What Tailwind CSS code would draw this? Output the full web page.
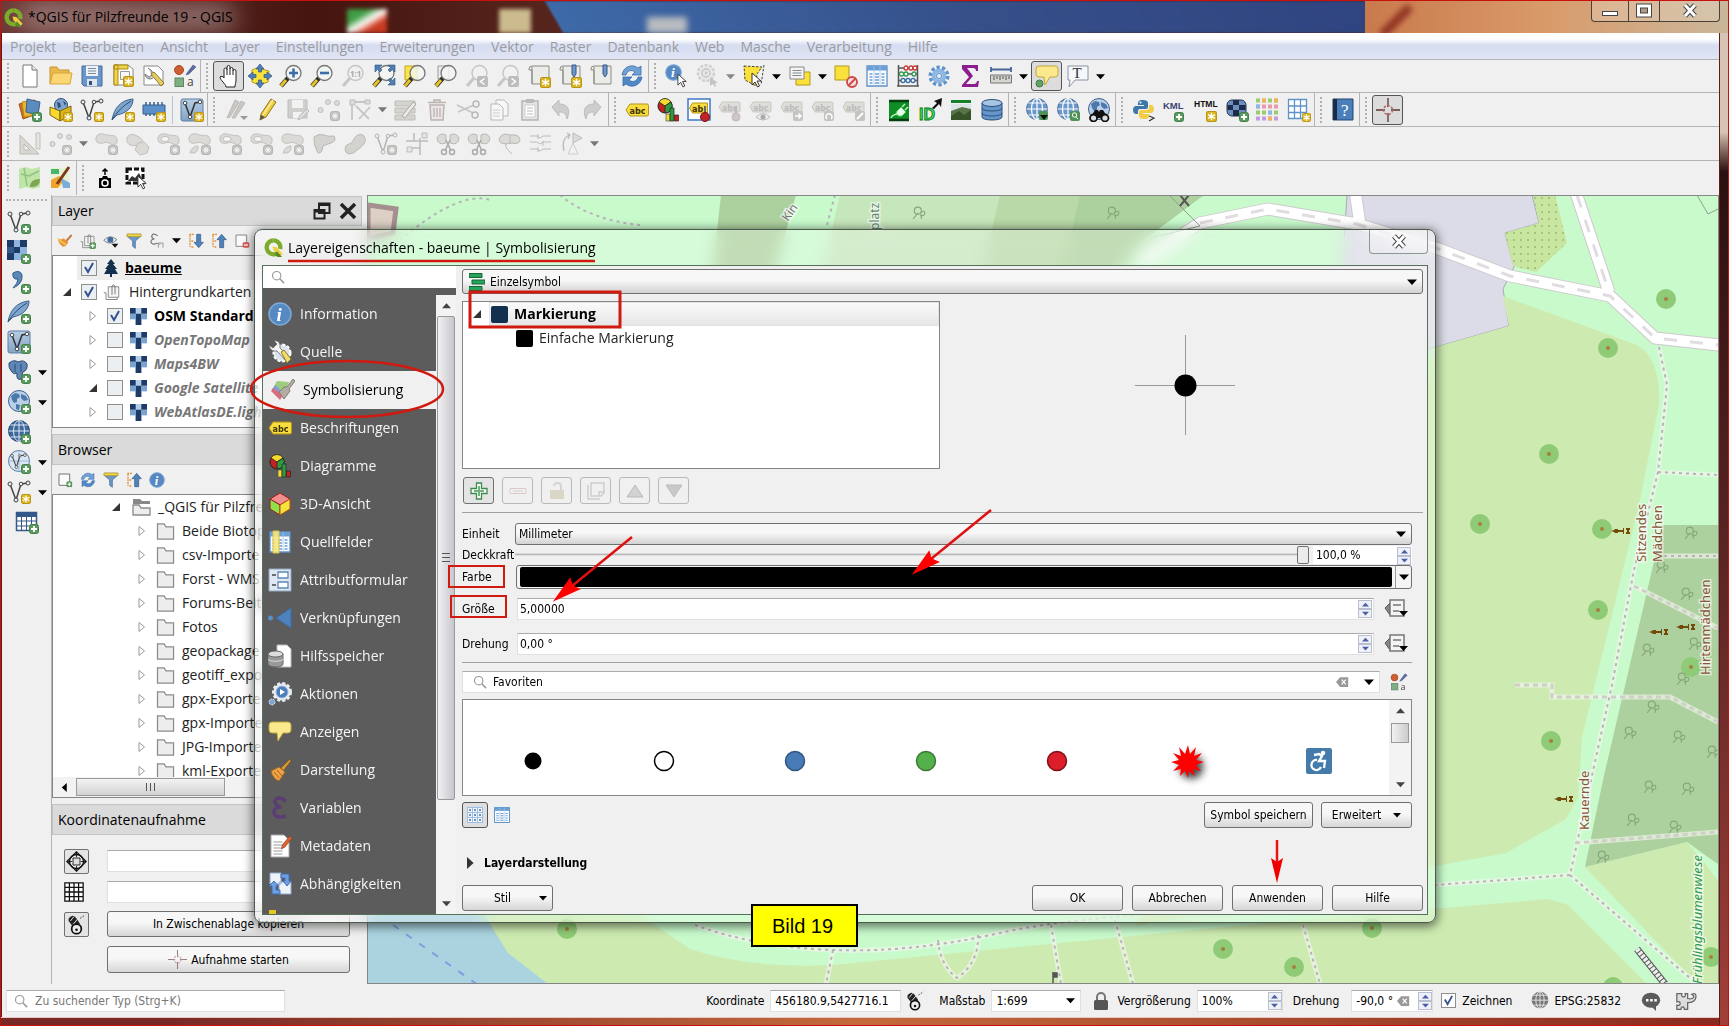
<!DOCTYPE html>
<html lang="de">
<head>
<meta charset="utf-8">
<title>*QGIS für Pilzfreunde 19 - QGIS</title>
<script src="https://cdn.jsdelivr.net/npm/@tailwindcss/browser@4"></script>
</head>
<body class="relative flex h-screen min-h-[1026px] flex-col overflow-hidden border border-[#c8100c] bg-[#5a1f1a] font-['Open_Sans',sans-serif] text-sm text-black">

<!-- shared paints -->
<svg class="absolute size-0" aria-hidden="true"><defs>
<linearGradient id="gBlue" x1="0" y1="0" x2="0" y2="1"><stop offset="0" stop-color="#8fb8de"/><stop offset="1" stop-color="#3a6ea5"/></linearGradient>
<pattern id="pDots" width="7" height="7" patternUnits="userSpaceOnUse"><circle cx="2" cy="2" r="1" fill="#9ab970"/></pattern>
</defs></svg>
<!-- icon library -->
<svg class="hidden" xmlns="http://www.w3.org/2000/svg">
<symbol id="plus" viewBox="0 0 10 10"><rect x=".5" y=".5" width="9" height="9" rx="2" fill="#5b9a5f" stroke="#44804a"/><path d="M5 2v6M2 5h6" stroke="#fff" stroke-width="1.800"/></symbol>
<symbol id="star" viewBox="0 0 10 10"><rect x=".5" y=".5" width="9" height="9" rx="1.500" fill="#dcb41c" stroke="#b8951a"/><path d="M5 1.500v7M1.800 3.200l6.400 3.600M8.200 3.200L1.800 6.800" stroke="#fff" stroke-width="1.300"/></symbol>
<symbol id="gbadge" viewBox="0 0 10 10"><rect x=".5" y=".5" width="9" height="9" rx="2" fill="#c4c4c0" stroke="#b4b4b0"/><path d="M5 2v6M2 5h6M3 3l4 4M7 3L3 7" stroke="#f6f6f6"/></symbol>
<symbol id="down" viewBox="0 0 10 10"><path d="M0 2.500h10L5 8z" fill="currentColor"/></symbol>
<symbol id="up" viewBox="0 0 10 10"><path d="M0 8h10L5 2.500z" fill="currentColor"/></symbol>
<symbol id="lens" viewBox="0 0 16 16"><circle cx="6.500" cy="6.500" r="4.800" fill="none" stroke="#999" stroke-width="1.300"/><path d="M10 10l5 5" stroke="#999" stroke-width="1.700"/></symbol>
<symbol id="qgis" viewBox="0 0 22 22"><path d="M11 3.500a7.300 7.300 0 1 0 3.500 13.800" fill="none" stroke="#7dac2c" stroke-width="4.500"/><path d="M11 3.500a7.300 7.300 0 0 1 7 9" fill="none" stroke="#7dac2c" stroke-width="4.500"/><path d="M10 10l4 .5 6.500 7-2.500 3-7-6.500z" fill="#ecd13c"/><path d="M14.500 15l5.500 6h-5l-2.500-3z" fill="#58872a"/></symbol>
<symbol id="new" viewBox="0 0 24 24"><path d="M5 1h9l5 5v17H5z" fill="#fff" stroke="#777"/><path d="M14 1v5h5" fill="#eee" stroke="#777"/></symbol>
<symbol id="open" viewBox="0 0 24 24"><path d="M1 20V3h7l2 3h10v4" fill="#eab84b" stroke="#c9962d"/><path d="M1 20L4 9h19l-2 11z" fill="#fbd675" stroke="#d9a63a"/></symbol>
<symbol id="save" viewBox="0 0 24 24"><path d="M2 2h20v20H4l-2-2z" fill="#6a96cc" stroke="#47699b"/><path d="M6 2h12v10H6z" fill="#edf1f5"/><path d="M8 4.500h8M8 7h8M8 9.500h8" stroke="#7f8c99"/><path d="M7 15h10v7H7z" fill="#dfe6ee"/><path d="M9 17h3v4H9z" fill="#30507c"/></symbol>
<symbol id="layout" viewBox="0 0 24 24"><path d="M3 1h14l5 4v16H3z" fill="#fff" stroke="#888"/><path d="M3 1h4v20H3zM3 1h14v4H3z" fill="#f1d44b" stroke="#ad8c10"/><path d="M9.500 7.500h9v8h-9z" fill="#f8f8f8" stroke="#999"/><use href="#star" x="12" y="12" width="11" height="11"/></symbol>
<symbol id="wrench" viewBox="0 0 24 24"><path d="M2 2h14l5 5v14H2z" fill="#fff" stroke="#888"/><path d="M6 4l4 3v4l-3 2-4-3a5 5 0 0 0 8 4" fill="#ccc" stroke="#777"/><path d="M9 10l3-2 10 11-3 3z" fill="#e5cd62" stroke="#8d7a29"/></symbol>
<symbol id="style" viewBox="0 0 24 24"><circle cx="6" cy="6" r="4.500" fill="#cf5f32" stroke="#a34a24"/><path d="M14 9l6-8 3 2-7 7-3 1z" fill="#5d6ca0" stroke="#3f4e80" stroke-width=".5"/><rect x="2" y="14" width="8.500" height="8.500" fill="#7fae84" stroke="#5c8862"/><text x="14" y="22" font-size="12" fill="#444" font-family="Open Sans">a</text></symbol>
<symbol id="hand" viewBox="0 0 24 24"><path d="M7 14V5.500a1.500 1.500 0 0 1 3 0V3a1.500 1.500 0 0 1 3 0v2a1.500 1.500 0 0 1 3 0v2a1.500 1.500 0 0 1 3 0v9c0 3-1 4-1 7H9c0-3-6-7-6-10 1-1 3-1 4 1z" fill="#fff" stroke="#222"/><path d="M10 5v6M13 5v6M16 7v4" stroke="#222"/></symbol>
<symbol id="pan" viewBox="0 0 24 24"><path d="M4 6l5-2 12 3-1 11-9 3-7-3z" fill="#f9e23c" stroke="#b39a12"/><path d="M12 0l4 5h-2.500v3h-3V5H8zM12 24l4-5h-2.500v-3h-3v3H8zM0 12l5-4v2.500h3v3H5V16zM24 12l-5-4v2.500h-3v3h3V16z" fill="#4f7fb5" stroke="#2f5580" stroke-width=".7"/></symbol>
<symbol id="mag" viewBox="0 0 24 24"><path d="M2 22l7-8" stroke="#2b2b2b" stroke-width="4.500"/><path d="M2 22l5-6" stroke="#e6c229" stroke-width="3"/><circle cx="14.500" cy="9" r="7.500" fill="#f4f6f4" fill-opacity=".8" stroke="#777" stroke-width="1.300"/></symbol>
<symbol id="gmag" viewBox="0 0 24 24"><path d="M2 22l7-8" stroke="#c6c6c6" stroke-width="3"/><circle cx="14.500" cy="9" r="7.500" fill="#f1f1f1" stroke="#c4c4c4" stroke-width="1.300"/></symbol>
<symbol id="zin" viewBox="0 0 24 24"><use href="#mag"/><path d="M14.500 4.500v9M10 9h9" stroke="#3b6ea8" stroke-width="2.600"/></symbol>
<symbol id="zout" viewBox="0 0 24 24"><use href="#mag"/><path d="M10 9h9" stroke="#3b6ea8" stroke-width="2.600"/></symbol>
<symbol id="z11" viewBox="0 0 24 24"><use href="#gmag"/><text x="9" y="12.500" font-size="8" font-weight="bold" fill="#aaa" font-family="Open Sans">1:1</text></symbol>
<symbol id="zfull" viewBox="0 0 24 24"><use href="#mag"/><path d="M3 1h7L7.500 3.500 10 6 8 8 5.500 5.500 3 8zM23 1v7l-2.500-2.500L18 8l-2-2 2.500-2.500L16 1zM23 21h-7l2.500-2.500L16 16l2-2 2.500 2.500L23 14z" fill="#4f7fb5" stroke="#2f5580" stroke-width=".6"/></symbol>
<symbol id="zsel" viewBox="0 0 24 24"><path d="M2 2h12v14H2z" fill="#fbe44a" stroke="#c2a516"/><use href="#mag"/></symbol>
<symbol id="zlay" viewBox="0 0 24 24"><path d="M4 2h11v13H4z" fill="#ececec" stroke="#999"/><use href="#mag"/></symbol>
<symbol id="zlast" viewBox="0 0 24 24"><use href="#gmag"/><rect x="12" y="12" width="11" height="11" rx="2" fill="#bdbdbd"/><path d="M19.500 14.500l-4 3 4 3" fill="none" stroke="#fff" stroke-width="1.500"/></symbol>
<symbol id="znext" viewBox="0 0 24 24"><use href="#gmag"/><rect x="12" y="12" width="11" height="11" rx="2" fill="#bdbdbd"/><path d="M15.500 14.500l4 3-4 3" fill="none" stroke="#fff" stroke-width="1.500"/></symbol>
<symbol id="map" viewBox="0 0 24 24"><path d="M2 5q0-3 3-3h17v18H5V6H2zM5 20V3" fill="#ebebe7" stroke="#8b8b85"/></symbol>
<symbol id="mapnew" viewBox="0 0 24 24"><use href="#map"/><use href="#star" x="13" y="13" width="11" height="11"/></symbol>
<symbol id="bm" viewBox="0 0 24 24"><use href="#map"/><path d="M14 1h4v9l-2 3-2-3z" fill="#6d98c8" stroke="#35578a"/></symbol>
<symbol id="bmnew" viewBox="0 0 24 24"><use href="#bm"/><use href="#star" x="13" y="13" width="11" height="11"/></symbol>
<symbol id="refresh" viewBox="0 0 24 24"><path d="M2 11C3 3 12-1 18 4l3-2v9h-9l3-3c-4-3-8-1-9 3z" fill="#6fa0d6" stroke="#3d6da8" stroke-width=".8"/><path d="M22 13c-1 8-10 12-16 7l-3 2v-9h9l-3 3c4 3 8 1 9-3z" fill="#5088c6" stroke="#3d6da8" stroke-width=".8"/></symbol>
<symbol id="cursor" viewBox="0 0 12 16"><path d="M1 1v12l3-3 2.500 5 2-1-2.500-5h4z" fill="#fff" stroke="#333"/></symbol>
<symbol id="info" viewBox="0 0 24 24"><circle cx="12" cy="12" r="11" fill="#5689c2" stroke="#7fa9d6" stroke-width="1.500"/><text x="8.500" y="19" font-size="19" font-style="italic" font-weight="bold" fill="#fff" font-family="Liberation Serif">i</text></symbol>
<symbol id="ident" viewBox="0 0 24 24"><use href="#info" width="17" height="17"/><use href="#cursor" x="12" y="9" width="11" height="15"/></symbol>
<symbol id="action" viewBox="0 0 24 24"><circle cx="10" cy="9" r="8" fill="#e9e9e9" stroke="#cfcfcf" stroke-width="2.500" stroke-dasharray="3 1.500"/><circle cx="10" cy="9" r="4" fill="none" stroke="#c4c4c4" stroke-width="1.500"/><path d="M9 7l3 2-3 2zM14 13v9l3-2 2 3 1-1-1-3h3z" fill="#c4c4c4"/></symbol>
<symbol id="select" viewBox="0 0 24 24"><path d="M2 2l18 1-5 7-1 12L3 16z" fill="#fae03a" stroke="#444" stroke-dasharray="2.500 1.500"/><path d="M22 1l-3 20" stroke="#444" stroke-dasharray="2.500 1.500"/><use href="#cursor" x="9" y="8" width="12" height="16"/></symbol>
<symbol id="selform" viewBox="0 0 24 24"><path d="M8 8h14v13H8z" fill="#fae03a" stroke="#b49a18"/><path d="M2 3h14v12H2z" fill="#f4f4f4" stroke="#888"/><path d="M4.500 6.500h9M4.500 9h9M4.500 11.500h9" stroke="#888"/></symbol>
<symbol id="desel" viewBox="0 0 24 24"><path d="M1 2h14v14H1z" fill="#fae03a" stroke="#b49a18"/><circle cx="18" cy="18" r="5" fill="#f7dcdc" stroke="#cd4747" stroke-width="1.800"/><path d="M14.500 21.500l7-7" stroke="#cd4747" stroke-width="1.800"/></symbol>
<symbol id="table" viewBox="0 0 24 24"><path d="M2 2h20v20H2z" fill="#fbfdff" stroke="#5b8fc6" stroke-width="1.300"/><path d="M2 2h20v4.500H2z" fill="#6b9fd6"/><path d="M4.500 10h3M10 10h4M16.500 10h3M4.500 13h3M10 13h4M16.500 13h3M4.500 16h3M10 16h4M16.500 16h3M4.500 19h3M10 19h4M16.500 19h3" stroke="#6b9fd6" stroke-width="1.500"/><path d="M9 2v20M15 2v20" stroke="#a8c6e6" stroke-width=".8"/></symbol>
<symbol id="abacus" viewBox="0 0 24 24"><path d="M2.500 1v21M21.500 1v21M2 4h20M2 10h20M2 16.500h20M1 22h22" stroke="#555" stroke-width="1.500"/><g fill="#fff" stroke-width="1.300"><g stroke="#cc3434"><circle cx="10" cy="4" r="2"/><circle cx="15" cy="4" r="2"/><circle cx="19" cy="4" r="2"/></g><g stroke="#2f9a51"><circle cx="5.500" cy="10" r="2"/><circle cx="10" cy="10" r="2"/><circle cx="18" cy="10" r="2"/></g><g stroke="#3a6ea5"><circle cx="7" cy="16.500" r="2"/><circle cx="12" cy="16.500" r="2"/><circle cx="17" cy="16.500" r="2"/></g></g></symbol>
<symbol id="gear" viewBox="0 0 24 24"><circle cx="12" cy="12" r="8.500" fill="none" stroke="#5f93cd" stroke-width="4" stroke-dasharray="3.200 2.140"/><circle cx="12" cy="12" r="5.500" fill="#a4c6ea" stroke="#8db6e2" stroke-width="3.500"/><circle cx="12" cy="12" r="2.500" fill="#f0f0f0" stroke="#5f93cd"/></symbol>
<symbol id="sigma" viewBox="0 0 24 24"><path d="M4 1h16v6h-2c0-2-1-3-3-3H9l6 8-7 8h8c2 0 3-2 3-3h2l-1 6H4v-2l7-8-7-8z" fill="#8d1c8f"/></symbol>
<symbol id="measure" viewBox="0 0 24 24"><path d="M2 5.500h20M2 3v5M22 3v5" stroke="#46639a" stroke-width="1.800"/><path d="M1.500 11h21v8h-21z" fill="#d4d4d0" stroke="#777"/><path d="M5 12v4M8 12v3M11 12v4M14 12v3M17 12v4M20 12v3" stroke="#555"/></symbol>
<symbol id="bubble" viewBox="0 0 24 24"><path d="M4 2h16q3 0 3 3v5q0 3-3 3h-5l-5 8-1-8H4q-3 0-3-3V5q0-3 3-3z" fill="#fbe98e" stroke="#c1a63c"/></symbol>
<symbol id="tip" viewBox="0 0 24 24"><use href="#bubble"/><circle cx="4.500" cy="19.500" r="3.500" fill="#63a069" stroke="#3f7d47"/></symbol>
<symbol id="textann" viewBox="0 0 24 24"><path d="M2 2h20v14H9l-6 7 1-7H2z" fill="#f6f7fa" stroke="#8a93a5"/><text x="6.500" y="14" font-size="15" fill="#333" font-family="Liberation Serif">T</text></symbol>
<symbol id="dsm" viewBox="0 0 24 24"><path d="M1 6l12-3 3 14-11 4z" fill="#d66f1f" stroke="#a45213"/><path d="M4 4l13-2 1 15-12 2z" fill="#e9b833" stroke="#b38a1a"/><path d="M9 1l13 3-2 13-12-3z" fill="#5c8bbd" stroke="#3b618c"/><use href="#plus" x="14" y="14" width="10" height="10"/></symbol>
<symbol id="gpkg" viewBox="0 0 24 24"><circle cx="12" cy="7" r="6.500" fill="#7ea6d0" stroke="#2e4d74"/><path d="M8 4l3 1 1 4-3 1zM14 3l3 2-1 3z" fill="#2e4d74"/><path d="M1 9l10 4v10L1 17z" fill="#f9d92f" stroke="#7d6608"/><path d="M22 8l-11 5v10l11-6z" fill="#dcb41c" stroke="#7d6608"/><use href="#star" x="14" y="14" width="10" height="10"/></symbol>
<symbol id="vec" viewBox="0 0 24 24"><path d="M3 4l6 16 5-16 7-1" fill="none" stroke="#444" stroke-width="1.500"/><g fill="#e4ecf4" stroke="#444"><circle cx="3" cy="4" r="2"/><circle cx="9" cy="20" r="2"/><circle cx="14" cy="4" r="1.800"/><circle cx="21" cy="3" r="2"/></g></symbol>
<symbol id="vecnew" viewBox="0 0 24 24"><use href="#vec"/><use href="#star" x="14" y="14" width="10" height="10"/></symbol>
<symbol id="vecplus" viewBox="0 0 24 24"><use href="#vec"/><use href="#plus" x="14" y="14" width="10" height="10"/></symbol>
<symbol id="feather" viewBox="0 0 24 24"><path d="M1 22C3 10 10 2 22 1c0 8-6 14-16 16z" fill="#7fa6cf" stroke="#3b618c"/><path d="M1 22Q8 10 20 3" stroke="#2e4d74" fill="none"/></symbol>
<symbol id="feanew" viewBox="0 0 24 24"><use href="#feather"/><use href="#star" x="14" y="14" width="10" height="10"/></symbol>
<symbol id="feaplus" viewBox="0 0 24 24"><use href="#feather"/><use href="#plus" x="14" y="14" width="10" height="10"/></symbol>
<symbol id="chip" viewBox="0 0 24 24"><path d="M4 4v14M8 4v14M12 4v14M16 4v14M20 4v14" stroke="#3b618c" stroke-width="1.500"/><path d="M1 7h22v9H1z" fill="#5c90c8" stroke="#355c8c"/><use href="#star" x="14" y="14" width="10" height="10"/></symbol>
<symbol id="vlay" viewBox="0 0 24 24"><rect x="1" y="1" width="22" height="22" rx="2" fill="url(#gBlue)" fill-opacity=".6" stroke="#5a7fa8"/><path d="M5 5l5 14 5-14 5-1" fill="none" stroke="#333" stroke-width="1.500"/><circle cx="5" cy="5" r="1.800" fill="#fff" stroke="#444"/><circle cx="10" cy="19" r="1.800" fill="#fff" stroke="#444"/><circle cx="20" cy="4" r="1.800" fill="#fff" stroke="#444"/></symbol>
<symbol id="vlaynew" viewBox="0 0 24 24"><use href="#vlay"/><use href="#star" x="14" y="14" width="10" height="10"/></symbol>
<symbol id="vlayplus" viewBox="0 0 24 24"><use href="#vlay"/><use href="#plus" x="14" y="14" width="10" height="10"/></symbol>
<symbol id="gedits" viewBox="0 0 24 24"><path d="M3 20L11 2l4 2L6 19zM8 20l9-17 4 2-10 15z" fill="#cbc7c1" stroke="#bbb"/><path d="M16 18h8l-4 4z" fill="#999"/></symbol>
<symbol id="pencil" viewBox="0 0 24 24"><path d="M5 22l1-6L16 1l5 3L11 19z" fill="#efcf3e" stroke="#8d7417"/><path d="M5 22l1-5 4 2z" fill="#555"/><path d="M8 17L18 2" stroke="#fbeb9a" stroke-width="1.500"/></symbol>
<symbol id="gsave" viewBox="0 0 24 24"><path d="M2 2h19v18H2z" fill="#cfcfcb" stroke="#bdbdb9"/><path d="M6 2h11v8H6zM7 14h9v6H7z" fill="#f2f2f2"/><path d="M12 22l2-5 7-6 2 2-7 7z" fill="#ddd" stroke="#bbb"/></symbol>
<symbol id="gpts" viewBox="0 0 24 24"><g fill="#dcdcda" stroke="#bdbdbb"><circle cx="3.500" cy="12" r="2.500"/><circle cx="11" cy="4" r="2.500"/><circle cx="20" cy="5" r="2.500"/></g><use href="#gbadge" x="13" y="13" width="10" height="10"/></symbol>
<symbol id="gvert" viewBox="0 0 24 24"><path d="M4 22V4h15M8 8l13 13M11 21L22 9" fill="none" stroke="#c6c6c4" stroke-width="1.800"/><path d="M2 2h5v5H2zM17 2h5v4h-5z" fill="#ddd" stroke="#bbb"/></symbol>
<symbol id="gattr" viewBox="0 0 24 24"><path d="M1 3h20v5H1zM1 10h20v5H1zM1 17h20v5H1z" fill="#d5d3ce" stroke="#c0beb9"/><path d="M8 18L19 4l3 2-11 14z" fill="#e9e9e5" stroke="#aaa"/></symbol>
<symbol id="trash" viewBox="0 0 24 24"><path d="M5 7h14l-1 15H6zM3 4.500h18M9 4V2h6v2" fill="#ebe6e4" stroke="#bcb3b0" stroke-width="1.500"/><path d="M9 10v9M12 10v9M15 10v9" stroke="#bcb3b0" stroke-width="1.300"/></symbol>
<symbol id="cut" viewBox="0 0 24 24"><path d="M1 7l16 8M2 14l16-7" stroke="#c6c6c4" stroke-width="1.800"/><circle cx="20" cy="6" r="3" fill="none" stroke="#b9b9b7" stroke-width="1.500"/><circle cx="19" cy="17" r="3" fill="none" stroke="#b9b9b7" stroke-width="1.500"/></symbol>
<symbol id="copy" viewBox="0 0 24 24"><path d="M9 2h8l4 4v12H9z" fill="#f7f7f7" stroke="#b9b9b7"/><path d="M4 6h8l4 4v12H4z" fill="#f7f7f7" stroke="#b9b9b7"/><path d="M6 12h7M6 15h7M6 18h7" stroke="#ccc"/></symbol>
<symbol id="paste" viewBox="0 0 24 24"><path d="M4 3h16v19H4z" fill="#e5e5e3" stroke="#b4b4b2" stroke-width="1.500"/><path d="M7 7h10v12H7z" fill="#fff" stroke="#ccc"/><path d="M8 1h8v4H8z" fill="#bbb"/><path d="M9 10h6M9 13h6M9 16h6" stroke="#bbb"/></symbol>
<symbol id="undo" viewBox="0 0 24 24"><path d="M3 9l7-7v4c9 0 12 6 8 15-1-6-3-7-8-7v4z" fill="#cdcdcb" stroke="#bcbcba"/></symbol>
<symbol id="redo" viewBox="0 0 24 24"><path d="M21 9l-7-7v4C5 6 2 12 6 21c1-6 3-7 8-7v4z" fill="#cdcdcb" stroke="#bcbcba"/></symbol>
<symbol id="abc" viewBox="0 0 24 24"><path d="M1 12l4-6h17q1.500 0 1.500 1.500v9q0 1.500-1.500 1.500H5z" fill="#f8dd3d" stroke="#b4941a"/><text x="4.500" y="15.500" font-size="9" font-weight="bold" fill="#3d3205" font-family="DejaVu Sans Condensed">abc</text></symbol>
<symbol id="diag" viewBox="0 0 24 24"><circle cx="9" cy="8" r="7" fill="#c81f1f" stroke="#222"/><path d="M9 8L3 4a7 7 0 0 1 12 0z" fill="#f5dc2c" stroke="#222" stroke-width=".8"/><path d="M9 8l6-4a7 7 0 0 1-6 11z" fill="#2f9a3f" stroke="#222" stroke-width=".8"/><path d="M10 16h4v7h-4z" fill="#f5dc2c" stroke="#555" stroke-width=".7"/><path d="M14 10h4v13h-4z" fill="#2f9a3f" stroke="#222" stroke-width=".7"/><path d="M18.500 17h4v6h-4z" fill="#c81f1f" stroke="#222" stroke-width=".7"/></symbol>
<symbol id="abpin" viewBox="0 0 24 24"><path d="M1 1h22v21H1z" fill="#fff" stroke="#3b79c6" stroke-width="1.500"/><path d="M2.500 10l3-5h15v10h-15z" fill="#f8dd3d" stroke="#b4941a"/><text x="5" y="14" font-size="9" font-weight="bold" fill="#3d3205" font-family="DejaVu Sans Condensed">ab</text><path d="M18 8v8" stroke="#666" stroke-width="2"/><circle cx="18" cy="19" r="4.500" fill="#c22525" stroke="#7d1212"/></symbol>
<symbol id="glab" viewBox="0 0 24 24"><path d="M1 9l3-5h17q1 0 1 1v8q0 1-1 1H4z" fill="#deddd8" stroke="#c9c8c3"/><text x="4" y="12.500" font-size="8.500" font-weight="bold" fill="#bbb" font-family="DejaVu Sans Condensed">abc</text></symbol>
<symbol id="glab1" viewBox="0 0 24 24"><use href="#glab"/><path d="M18 8v8" stroke="#bbb" stroke-width="2"/><circle cx="18" cy="19" r="4" fill="#cfc6c4" stroke="#bbb"/></symbol>
<symbol id="glab2" viewBox="0 0 24 24"><use href="#glab"/><path d="M7 19q7-7 14 0-7 6-14 0z" fill="#eee" stroke="#bbb"/><circle cx="14" cy="19" r="2.500" fill="#aaa"/></symbol>
<symbol id="glab3" viewBox="0 0 24 24"><use href="#glab"/><rect x="13" y="13" width="10" height="10" rx="2" fill="#c4c4c0"/><path d="M15 18h6M18.500 15.500l2.500 2.500-2.500 2.500" stroke="#fff" fill="none" stroke-width="1.500"/></symbol>
<symbol id="glab4" viewBox="0 0 24 24"><use href="#glab"/><rect x="13" y="13" width="10" height="10" rx="2" fill="#c4c4c0"/><path d="M16 21a3 3 0 1 1 4 0" stroke="#fff" fill="none" stroke-width="1.500"/></symbol>
<symbol id="glab5" viewBox="0 0 24 24"><use href="#glab"/><rect x="13" y="13" width="10" height="10" rx="2" fill="#c4c4c0"/><path d="M15 21l6-6" stroke="#fff" stroke-width="2"/></symbol>
<symbol id="plug" viewBox="0 0 24 24"><path d="M2 4h20v18H2z" fill="#0e8d26"/><path d="M2 3h20M2 22h20" stroke="#053f10" stroke-width="2.500"/><path d="M10 13l4-4 5 5-4 4q-3 1-5-1t0-4z" fill="#e8fbe8" stroke="#39c24e"/><path d="M4 20q1-3 6-4M15 9l3-3M18 12l3-3" stroke="#b8f0be" stroke-width="1.500" fill="none"/></symbol>
<symbol id="idarrow" viewBox="0 0 24 24"><text x="1" y="22" font-size="16" font-weight="bold" fill="#3be04c" stroke="#0b6e1b" stroke-width=".8" font-family="Liberation Sans">ID</text><path d="M14 10l5-5-3-2 8-3-1 9-2-3-5 5z" fill="#111"/></symbol>
<symbol id="photo" viewBox="0 0 24 24"><path d="M2 2h20v3H2z" fill="#13812a"/><path d="M2 6h20v16H2z" fill="#59744b"/><path d="M2 6h20v5l-9-2-11 4z" fill="#dce3e6"/><path d="M2 18l8-5 5 4 7-5v10H2z" fill="#385229"/></symbol>
<symbol id="db" viewBox="0 0 24 24"><path d="M2 5v14c0 4 20 4 20 0V5" fill="#6596cb" stroke="#2d4f7a"/><ellipse cx="12" cy="5" rx="10" ry="3.500" fill="#a6c4e4" stroke="#2d4f7a"/><path d="M2 10c0 4 20 4 20 0M2 15c0 4 20 4 20 0" fill="none" stroke="#2d4f7a"/></symbol>
<symbol id="globe" viewBox="0 0 24 24"><circle cx="12" cy="11" r="10.500" fill="#6c98c9" stroke="#496f9e"/><path d="M12 .5v21M1.500 11h21M3.500 5h17M3.500 17h17" stroke="#fff" stroke-width="1.200"/><ellipse cx="12" cy="11" rx="5.500" ry="10.500" fill="none" stroke="#fff" stroke-width="1.200"/></symbol>
<symbol id="globe1" viewBox="0 0 24 24"><use href="#globe"/><rect x="14" y="13" width="9" height="9" rx="2" fill="#4f9256"/><path d="M15 17h8l-4 5z" fill="#111"/></symbol>
<symbol id="globe2" viewBox="0 0 24 24"><use href="#globe"/><rect x="14" y="13" width="10" height="10" rx="2" fill="#4f9256"/><circle cx="18.500" cy="17" r="2.200" fill="none" stroke="#fff"/><path d="M20 19l2 2" stroke="#fff"/></symbol>
<symbol id="earth" viewBox="0 0 24 24"><circle cx="12" cy="11" r="10.500" fill="#b9d0e8" stroke="#3d618f"/><path d="M4 6l4-3 4 1 1 3-3 2v3l-3 1-2-3zM14 4l5 2 2 4-4 1-3-3zM9 14l4 1-1 5-3-1z" fill="#4c78ab"/></symbol>
<symbol id="bino" viewBox="0 0 24 24"><use href="#earth"/><path d="M8 12h3l1 2 1-2h3l5 8H3z" fill="#111"/><circle cx="6.500" cy="20" r="3.500" fill="#ddd" stroke="#111" stroke-width="1.800"/><circle cx="18" cy="20" r="3.500" fill="#ddd" stroke="#111" stroke-width="1.800"/></symbol>
<symbol id="python" viewBox="0 0 24 24"><path d="M11 2c-5 0-5 2-5 5h6v1H4c-4 0-4 8 0 8h2v-3q0-2 2-2h6q2 0 2-2V5c0-2-2-3-5-3z" fill="#3c78a8"/><circle cx="8.500" cy="4.500" r="1" fill="#fff"/><path d="M12 21c5 0 5-2 5-4v-1h-6v-1h8c4 0 4-8 0-8h-2v3q0 2-2 2H9q-2 0-2 2v4c0 2 2 3 5 3z" fill="#f3cd43"/><path d="M17 18l5 2-5 3" fill="none" stroke="#333" stroke-width="1.200"/></symbol>
<symbol id="kml" viewBox="0 0 24 24"><text x="0" y="11" font-size="9.500" font-weight="bold" fill="#3d4470" font-family="Liberation Sans">KML</text><use href="#plus" x="11" y="14" width="10" height="10"/></symbol>
<symbol id="html" viewBox="0 0 24 24"><text x="0" y="9" font-size="8.500" font-weight="bold" fill="#111" font-family="Liberation Sans">HTML</text><use href="#star" x="12" y="13" width="11" height="11"/></symbol>
<symbol id="rasplus" viewBox="0 0 24 24"><rect x="2" y="2" width="19" height="16" rx="5" fill="#6c8fbf" stroke="#23344f"/><path d="M8 2h6v5H8zM2.500 7H8v5H2.500zM14 7h6.500v5H14zM8 12h6v6H8z" fill="#1d2d49"/><use href="#plus" x="14" y="14" width="10" height="10"/></symbol>
<symbol id="mosaic" viewBox="0 0 24 24"><g stroke-width="4" stroke-dasharray="4 2"><path d="M0 2.500h24M0 14.500h24" stroke="#9ccb6e"/><path d="M0 8.500h24" stroke="#e99aa8"/><path d="M0 20.500h24" stroke="#c49ae0"/><path d="M6 2.500h4M18 2.500h4M12 20.500h4" stroke="#f0b35c"/><path d="M12 14.500h4M0 8.500h4" stroke="#8db9ea"/></g></symbol>
<symbol id="grid" viewBox="0 0 24 24"><path d="M1.500 1.500h18v19h-18zM1.500 8h18M1.500 14.500h18M7.500 1.500v19M13.500 1.500v19" fill="#fff" stroke="#5e93c8" stroke-width="1.300"/><use href="#star" x="15" y="15" width="9" height="9"/></symbol>
<symbol id="helpb" viewBox="0 0 24 24"><path d="M2 1h20v21H2z" fill="#4b7fbb" stroke="#24446e"/><path d="M2 1h4v21H2z" fill="#1c2c44"/><text x="10" y="18" font-size="17" fill="#fff" font-family="Liberation Serif">?</text></symbol>
<symbol id="cross" viewBox="0 0 24 24"><path d="M12 0v9M12 15v9M0 12h9M15 12h9" stroke="#5a3434" stroke-width="1.300"/><circle cx="12" cy="12" r="4.500" fill="none" stroke="#b36a6a" stroke-width="1.500" stroke-dasharray="2.500 1.500"/></symbol>
<symbol id="tri" viewBox="0 0 24 24"><path d="M2 3v19h19zM6 12v6h6z" fill="#dad7d2" fill-rule="evenodd" stroke="#bdbab5"/><path d="M18 1h4v16h-4z" fill="#e6e4e0" stroke="#c2c0bb"/></symbol>
<symbol id="blob" viewBox="0 0 24 24"><path d="M1 6C2 0 9 2 12 3s9-1 10 4-3 7-6 5-5-2-8-1-8 0-7-5z" fill="#dbdad7" stroke="#c2c1be"/></symbol>
<symbol id="b1" viewBox="0 0 24 24"><use href="#blob"/><use href="#gbadge" x="13" y="13" width="10" height="10"/></symbol>
<symbol id="b2" viewBox="0 0 24 24"><path d="M1 6q2-5 8-3t8 6l-4 5-9-1q-4-2-3-7z" fill="#dbdad7" stroke="#c2c1be"/><path d="M12 11l6-1 5 5-2 6-7 2-5-5z" fill="#dbdad7" stroke="#c2c1be"/></symbol>
<symbol id="b3" viewBox="0 0 24 24"><use href="#blob"/><ellipse cx="8" cy="7" rx="4" ry="2.500" fill="#f6f6f6" stroke="#c2c1be"/><use href="#gbadge" x="13" y="13" width="10" height="10"/></symbol>
<symbol id="b4" viewBox="0 0 24 24"><use href="#blob"/><path d="M2 21q2-7 8-7 1 8-8 7z" fill="#dbdad7" stroke="#c2c1be"/><use href="#gbadge" x="13" y="13" width="10" height="10"/></symbol>
<symbol id="b5" viewBox="0 0 24 24"><path d="M2 5q5-4 10-2t10 1q3 5-3 7t-8 3q-1 8-5 7-5-8-4-16z" fill="#d3d2cf" stroke="#bab9b6"/></symbol>
<symbol id="b6" viewBox="0 0 24 24"><path d="M2 17q0-4 4-5t5-5q3-6 9-4 4 3 1 9-3 4-7 6-3 4-8 4-4-1-4-5z" fill="#d3d2cf" stroke="#bab9b6"/></symbol>
<symbol id="b7" viewBox="0 0 24 24"><g opacity=".35"><use href="#vec"/></g><use href="#gbadge" x="13" y="13" width="10" height="10"/></symbol>
<symbol id="b8" viewBox="0 0 24 24"><path d="M1 9h22M9 1v8M15 6v17M6 16h9" stroke="#bbb" stroke-width="1.500"/><path d="M17 1h5v5h-5zM2 15h5v5H2z" fill="#e5e5e5" stroke="#bbb"/></symbol>
<symbol id="b9" viewBox="0 0 24 24"><path d="M1 6q3-6 9-3v8q-8 3-9-5zM23 6q-3-6-9-3v8q8 3 9-5z" fill="#dbdad7" stroke="#b9b8b5"/><path d="M10 8l5 11M14 8L9 19" stroke="#aaa" stroke-width="1.500"/><circle cx="8" cy="20" r="2.500" fill="none" stroke="#aaa" stroke-width="1.500"/><circle cx="16" cy="20" r="2.500" fill="none" stroke="#aaa" stroke-width="1.500"/></symbol>
<symbol id="b10" viewBox="0 0 24 24"><path d="M1 7q3-7 11-4 10-1 10 5-1 5-8 3Q1 14 1 7z" fill="#dbdad7" stroke="#b9b8b5"/><path d="M12 3v9M8 12q-2 3 6 10" stroke="#bbb" fill="none"/></symbol>
<symbol id="b11" viewBox="0 0 24 24"><path d="M1 4h7l3 2 3-2h8M1 10h7l3 2 3-2h8M1 17h7l3 2 3-2h8M9 2v5M14 9v5M9 15v5" fill="none" stroke="#bbb"/></symbol>
<symbol id="b12" viewBox="0 0 24 24"><path d="M9 3Q1 7 4 19M7 1l3 2-2 4" fill="none" stroke="#bbb" stroke-width="1.300"/><path d="M13 1l9 5-9 5z" fill="#dcdbd8" stroke="#bbb"/><path d="M13 11l-5 11h10z" fill="none" stroke="#ccc"/></symbol>
<symbol id="osm1" viewBox="0 0 24 24"><path d="M1 3l6-2 7 2 8-2v20l-7 2-7-2-7 2z" fill="#bfe5a8"/><path d="M3 8l8 2 10-5M6 2l3 18" stroke="#8fc383" fill="none" stroke-width="1.500"/><path d="M12 21q0-8 10-8 0 9-10 8z" fill="#7da552"/></symbol>
<symbol id="osm2" viewBox="0 0 24 24"><path d="M2 2h18v19H2z" fill="#e8f1d2"/><path d="M2 3h8v5H2z" fill="#46b66a"/><path d="M2 14l8-4 5 4-6 8H2z" fill="#f2a32b"/><path d="M12 12l9 5v5h-7z" fill="#7aaed8"/><path d="M20 1L8 18" stroke="#7a3b1c" stroke-width="3"/></symbol>
<symbol id="cam" viewBox="0 0 24 24"><path d="M6 12h3l1-2h4l1 2h3v10H6z" fill="#000"/><circle cx="12" cy="17" r="3" fill="none" stroke="#fff" stroke-width="1.500"/><path d="M12 9V3M9.500 5.500L12 3l2.500 2.500" stroke="#000" fill="none" stroke-width="1.500"/></symbol>
<symbol id="shot" viewBox="0 0 24 24"><path d="M3 3h16v14H3z" fill="#fff" stroke="#111" stroke-width="3" stroke-dasharray="5 2"/><path d="M4 15l4-5 3 2 4-5 4 8z" fill="#333"/><use href="#cursor" x="13" y="9" width="11" height="15"/></symbol>
<symbol id="raster" viewBox="0 0 18 18"><path d="M0 0h18v12h-6v6H6v-6H0z" fill="#b4cde8"/><path d="M0 0h6v6H0zM12 0h6v6h-6zM6 6h6v6H6zM6 12h6v6H6z" fill="#1d3a68"/><path d="M0 6h6v6H0zM12 6h6v6h-6z" fill="#7ba3d0"/></symbol>
<symbol id="rasadd" viewBox="0 0 24 24"><path d="M0 0h20v20H0z" fill="#8fb3dc"/><path d="M0 0h7v7H0zM13 0h7v7h-7zM7 7h6v6H7zM0 13h7v7H0z" fill="#1d3a68"/><path d="M0 7h7v6H0z" fill="#33588a"/><use href="#plus" x="14" y="14" width="10" height="10"/></symbol>
<symbol id="comma" viewBox="0 0 24 24"><path d="M6 3q7-4 9 2 1 9-9 13 5-5 5-9-6 1-5-6z" fill="#5c88b8" stroke="#355c8c"/><use href="#plus" x="14" y="14" width="10" height="10"/></symbol>
<symbol id="eleph" viewBox="0 0 24 24"><path d="M2 3q5-4 9-1 6-3 9 2 1 6-4 8-1 2-2 7-5 2-4-6-3 2-5-1-4-4-3-9z" fill="#5d87b5" stroke="#2e4d74"/><path d="M8 4v8M14 4v8" stroke="#2e4d74"/><use href="#plus" x="14" y="14" width="10" height="10"/></symbol>
<symbol id="earthp" viewBox="0 0 24 24"><use href="#earth"/><use href="#plus" x="14" y="14" width="10" height="10"/></symbol>
<symbol id="globp" viewBox="0 0 24 24"><circle cx="12" cy="11" r="10.500" fill="#3f699c" stroke="#24446e"/><path d="M12 .5v21M1.500 11h21M3.500 5h17M3.500 17h17" stroke="#dce8f5"/><ellipse cx="12" cy="11" rx="5.500" ry="10.500" fill="none" stroke="#dce8f5"/><use href="#plus" x="14" y="14" width="10" height="10"/></symbol>
<symbol id="globv" viewBox="0 0 24 24"><circle cx="12" cy="11" r="10.500" fill="#dbe7f3" stroke="#5a7fa8"/><path d="M12 .5v21M1.500 11h21" stroke="#9dbad8"/><use href="#vec" x="3" y="3" width="17" height="17"/><use href="#plus" x="14" y="14" width="10" height="10"/></symbol>
<symbol id="tabadd" viewBox="0 0 24 24"><path d="M1.500 2.500h20v18h-20z" fill="#fff" stroke="#33588a" stroke-width="1.500"/><path d="M1 2h21v5H1z" fill="#33588a"/><path d="M6.500 3v18M11.500 3v18M16.500 3v18M1 11h21M1 16h21" stroke="#33588a"/><use href="#plus" x="14" y="14" width="10" height="10"/></symbol>
<symbol id="brush" viewBox="0 0 24 24"><path d="M13 10l9-9 1 2-8 10z" fill="#d99a3c" stroke="#8a5a17"/><path d="M3 13l8-4 6 5-6 9q-6-2-8-10z" fill="#efa348" stroke="#a4671a"/><path d="M6 14l5 6M9 12l5 6" stroke="#a4671a"/></symbol>
<symbol id="symb" viewBox="0 0 24 24"><path d="M1 12L6 3l12 1-6 15z" fill="#9ccc7e"/><path d="M1 12l3-5 9 8-4 4z" fill="#7f9fd8"/><path d="M0 13l2-3 10 7-3 5z" fill="#d86e7c"/><path d="M16 9l6-8 2 2-6 8 1 2-6 8-5-7 5-5z" fill="#b3aca3" stroke="#857e75"/></symbol>
<symbol id="sweep" viewBox="0 0 24 24"><path d="M13 11l8-9 2 2-8 9z" fill="#c9743b"/><path d="M1 8q7 3 9 0l7 6q-6 9-9 6-6-4-7-12z" fill="#e8923c"/><path d="M1 8q5 6 12 9" stroke="#f7db54" stroke-width="2" fill="none"/></symbol>
<symbol id="group" viewBox="0 0 24 24"><path d="M1 13h3v9h15v-3" fill="none" stroke="#888" stroke-width="1.300"/><path d="M7 5h14v14H7z" fill="#f6f6f6" stroke="#888" stroke-width="1.300"/><path d="M12 16V4q2-3 4 0v11" fill="none" stroke="#777" stroke-width="1.300"/></symbol>
<symbol id="groupadd" viewBox="0 0 24 24"><use href="#group"/><use href="#plus" x="14" y="14" width="10" height="10"/></symbol>
<symbol id="eye" viewBox="0 0 24 24"><path d="M1 11Q10 1 21 10 11 20 1 11z" fill="#e7edf3" stroke="#888" stroke-width="1.500"/><circle cx="11" cy="10" r="4.500" fill="#456e9f"/><path d="M13 16h10l-5 6z" fill="#111"/></symbol>
<symbol id="funnel" viewBox="0 0 24 24"><path d="M2 2h20v3l-8 7v11l-4-3v-8L2 5z" fill="#6d98c8" stroke="#3b618c"/><path d="M1.500 1.500h21v4h-21z" fill="#f2d848" stroke="#a98f1c"/></symbol>
<symbol id="eps" viewBox="0 0 24 24"><path d="M13 4Q5-1 4 5q0 3 4 4-6 1-5 5 2 5 10 1" fill="none" stroke="#777" stroke-width="1.800"/><path d="M14 22v-7h7v7M14 15l3 3" fill="none" stroke="#999" stroke-width="1.500"/></symbol>
<symbol id="expd" viewBox="0 0 24 24"><path d="M2 2h8M5 12h4M5 21h4M3 3v18" stroke="#e2943a" stroke-width="2" fill="none" stroke-dasharray="3 1"/><path d="M13 2h6v12h4l-7 8-7-8h4z" fill="#5083bb" stroke="#2f5580"/></symbol>
<symbol id="coll" viewBox="0 0 24 24"><path d="M2 2h8M5 12h4M5 21h4M3 3v18" stroke="#e2943a" stroke-width="2" fill="none" stroke-dasharray="3 1"/><path d="M13 22h6V10h4l-7-8-7 8h4z" fill="#5083bb" stroke="#2f5580"/></symbol>
<symbol id="remv" viewBox="0 0 24 24"><path d="M3 3h16v17H3z" fill="#fafafa" stroke="#888" stroke-width="1.500"/><rect x="13" y="14" width="10" height="8" rx="2" fill="#d95656"/><path d="M15 18h6" stroke="#fff" stroke-width="2"/></symbol>
<symbol id="addl" viewBox="0 0 24 24"><path d="M3 3h16v17H3z" fill="#fafafa" stroke="#777" stroke-width="1.500"/><use href="#plus" x="14" y="14" width="9" height="9"/></symbol>
<symbol id="tree" viewBox="0 0 16 18"><path d="M8 0l4 5h-2l4 5h-2l3 5H9v3H7v-3H1l3-5H2l4-5H4z" fill="#14304f"/></symbol>
<symbol id="closed" viewBox="0 0 8 12"><path d="M1 1.500v9L6.500 6z" fill="#fff" stroke="#999"/></symbol>
<symbol id="opened" viewBox="0 0 8 8"><path d="M8 0v8H0z" fill="#333"/></symbol>
<symbol id="folder" viewBox="0 0 20 18"><path d="M1 1h7l2 3h8v13H1z" fill="#ededed" stroke="#8a8a8a" stroke-width="1.300"/></symbol>
<symbol id="folderopen" viewBox="0 0 20 18"><path d="M1 1h7l2 2h8v3H1z" fill="#888"/><path d="M1 7h6l2 3h9v7H1z" fill="#ededed" stroke="#8a8a8a" stroke-width="1.300"/></symbol>
<symbol id="mouse" viewBox="0 0 24 24"><path d="M3 5q5-6 9 0l4 6-7 5-6-8z" fill="#222"/><path d="M5 8l4-5M8 12l5-6" stroke="#fff"/><circle cx="12" cy="17" r="5.500" fill="#eee" stroke="#111" stroke-width="2"/><circle cx="12" cy="18" r="1.500" fill="#111"/><path d="M16 5l6-4" stroke="#333" stroke-dasharray="2 1.500"/></symbol>
<symbol id="compass" viewBox="0 0 24 24"><circle cx="12" cy="12" r="8" fill="#eee" stroke="#111" stroke-width="1.500"/><path d="M12 1l11 11-11 11L1 12z" fill="none" stroke="#111" stroke-width="1.500"/><path d="M8 8h8v8H8z" fill="#ddd" stroke="#111"/><path d="M12 1v6M12 17v6M1 12h6M17 12h6" stroke="#111"/></symbol>
<symbol id="bgrid" viewBox="0 0 24 24"><path d="M2 2h20v20H2zM7 2v20M12 2v20M17 2v20M2 7h20M2 12h20M2 17h20" fill="#fff" stroke="#111" stroke-width="1.400"/></symbol>
<symbol id="tools" viewBox="0 0 24 24"><circle cx="14" cy="13" r="8.500" fill="#dbe4ec" stroke="#fff" stroke-width="2" stroke-dasharray="3 2"/><path d="M1 5l4 3 4-4-3-3q5-1 6 4v3l9 9-3 4-9-10Q2 12 1 5z" fill="#f4f4f4" stroke="#666" stroke-width=".8"/><path d="M13 12l3-2 7 9-4 4z" fill="#f1dc6e" stroke="#8d7a29"/></symbol>
<symbol id="cube" viewBox="0 0 24 24"><path d="M12 1l10 6-10 6L2 7z" fill="#f08d8d" stroke="#9c1d1d"/><path d="M2 7l10 6v10L2 17z" fill="#8fe04c" stroke="#9c1d1d"/><path d="M22 7l-10 6v10l10-6z" fill="#f6e23c" stroke="#b8500f"/></symbol>
<symbol id="fields" viewBox="0 0 24 24"><use href="#table"/><path d="M5 1h6v22H5z" fill="#f9e77a" fill-opacity=".9" stroke="#d8c34e"/></symbol>
<symbol id="form" viewBox="0 0 24 24"><path d="M1 1h22v22H1z" fill="#dfe8f2" stroke="#8da6c0"/><path d="M10 4h10v6H10zM10 14h10v6H10z" fill="#fff" stroke="#5c88b8" stroke-width="1.300"/><path d="M4 7h4M4 17h4" stroke="#444" stroke-width="1.500"/></symbol>
<symbol id="join" viewBox="0 0 24 24"><circle cx="2.500" cy="12" r="2.500" fill="#5b8fcb"/><path d="M8 12L23 2v20z" fill="#4d82bd" stroke="#3a6ea5"/></symbol>
<symbol id="aux" viewBox="0 0 24 24"><path d="M9 1h10l4 4v18H9z" fill="#fff" stroke="#bbb"/><path d="M0 10v10c0 4 15 4 15 0V10" fill="#999" stroke="#666"/><ellipse cx="7.500" cy="10" rx="7.500" ry="3" fill="#ddd" stroke="#666"/><path d="M0 15c0 3 15 3 15 0" stroke="#ddd" fill="none"/></symbol>
<symbol id="act" viewBox="0 0 24 24"><circle cx="14" cy="10" r="8.500" fill="#e9edf0" stroke="#e9edf0" stroke-width="3" stroke-dasharray="3 2"/><circle cx="14" cy="10" r="6" fill="#4b7fbb" stroke="#9bb9da"/><path d="M12 7l5 3-5 3z" fill="#fff"/><circle cx="4" cy="20" r="3" fill="#7fa6d2" stroke="#d7e2ee" stroke-dasharray="2 1"/></symbol>
<symbol id="vari" viewBox="0 0 24 24"><path d="M18 5Q9-1 7 5q0 5 6 6-8 1-7 6 2 6 12 3" fill="none" stroke="#5b3d73" stroke-width="3.500"/></symbol>
<symbol id="meta" viewBox="0 0 24 24"><path d="M3 1h13l5 5v17H3z" fill="#fff" stroke="#aaa"/><path d="M5.500 8h9M5.500 11h9M5.500 14h7M5.500 17h9M5.500 20h9" stroke="#999"/><path d="M13 15l2-5 7-8 2 2-7 9z" fill="#e0632e" stroke="#8a4020" stroke-width=".7"/></symbol>
<symbol id="dep" viewBox="0 0 24 24"><path d="M2 1h11v11H2zM11 10h12v12H11z" fill="#eef3fa" stroke="#8fabd0"/><path d="M13 2h8v7h2l-4 5-4-5h2V6h-4zM12 22H4v-8H1l5-5 4 5H8v4h4z" fill="#6f9fe0" stroke="#3f6fb5"/></symbol>
<symbol id="dd" viewBox="0 0 24 20"><path d="M1 9l5-5v12z" fill="#888" stroke="#555"/><path d="M6 1h14v16H6z" fill="#f4f4f4" stroke="#777" stroke-width="1.500"/><path d="M9 6h8M9 12h6" stroke="#777" stroke-width="1.500"/><path d="M15 12h9l-4.500 5z" fill="#000"/></symbol>
<symbol id="bksp" viewBox="0 0 16 12"><path d="M5 0h10v12H5L0 6z" fill="#999"/><path d="M7 3l5 6M12 3L7 9" stroke="#fff" stroke-width="1.500"/></symbol>
<symbol id="statue" viewBox="0 0 20 8"><path d="M0 4l3-1 1-1h3v1h5V1h1v6h-1V5H7v1H4L3 5zM15 1h4v2h-1v2h1v2h-4V5h1V3h-1z" fill="#734a08"/></symbol>
<symbol id="ftree" viewBox="0 0 12 12"><path d="M1 11l4-5M2 4q0-3 3-3 3 0 3 3t-3 3-3-3M8 11V7M7 6q4-3 4 0t-4 2" fill="none" stroke="#86a877"/></symbol>
<symbol id="mtree" viewBox="0 0 20 20"><circle cx="10" cy="10" r="10" fill="#8fcb77"/><circle cx="10" cy="10" r="2" fill="#a5803c"/></symbol>
</svg>

<!-- title bar -->
<div class="relative flex h-8 shrink-0 items-center overflow-hidden bg-[#4a1c14]">
  <div class="absolute inset-y-0 left-0 w-[36%] bg-linear-to-r from-[#6d3936] from-0% via-[#45140f] via-50% to-[#5a2a22]"></div>
  <div class="absolute inset-y-0 left-[32%] right-[20%] -skew-x-[-30deg] bg-linear-to-r from-[#3d6aa8] via-[#36508a] to-[#2f4480] blur-[1px]"></div>
  <div class="absolute inset-y-0 right-0 w-[21%] bg-linear-to-r from-[#c97a4c] via-[#d99a6a] to-[#c9b79a]"></div>
  <div class="absolute inset-y-0 right-[19%] h-10 w-2 rotate-45 bg-[#8a2a1c] blur-[3px]"></div>
  <div class="absolute inset-y-1 left-5 w-[215px] rounded-full bg-white/40 blur-md"></div>
  <div class="absolute left-[346px] top-2 h-6 w-10 bg-linear-to-br from-[#3f9d46] from-30% via-white via-50% to-[#c93a22] to-70% blur-[2px]"></div>
  <div class="absolute left-[498px] top-2 h-6 w-8 bg-[#cbbb8e] blur-[2px]"></div>
  <div class="absolute left-[646px] top-4 h-4 w-10 bg-[#b9bcc0] blur-[3px]"></div>
  <svg class="relative ml-0.5 size-[21px]"><use href="#qgis"/></svg>
  <h1 class="relative ml-1 text-sm">*QGIS für Pilzfreunde 19 - QGIS</h1>
  <div class="relative mb-auto ml-auto mr-2 flex h-[21px] rounded-b border border-t-0 border-[#4b4038] bg-white/20 *:flex *:items-center *:justify-center">
    <button class="w-9" aria-label="Minimieren"><svg class="h-3 w-4"><rect x=".5" y="6.500" width="15" height="4" fill="#fff" stroke="#444"/></svg></button>
    <button class="w-8 border-x border-[#4b4038]" aria-label="Maximieren"><svg class="size-4"><rect x=".5" y="1" width="15" height="13" fill="#fff" stroke="#444"/><rect x="4.500" y="5" width="7" height="5" fill="#b39a86" stroke="#444"/></svg></button>
    <button class="w-[59px]" aria-label="Schließen"><svg class="size-4"><path d="M3 2l10 11M13 2L3 13" stroke="#444" stroke-width="5"/><path d="M3 2l10 11M13 2L3 13" stroke="#fff" stroke-width="3"/></svg></button>
  </div>
</div>

<div class="ml-px mr-[9px] flex min-h-0 flex-1 flex-col border-t border-white bg-[#f0f0f0]">
<header class="shrink-0 text-[#333] [&_button]:flex [&_button]:h-[30px] [&_button]:w-[31px] [&_button]:items-center [&_button]:justify-center [&_button_svg]:size-6 [&_button.arrow]:w-[15px] [&_button.arrow_svg]:size-[9px] [&_button.on]:rounded-[3px] [&_button.on]:border [&_button.on]:border-[#555] [&_button.on]:bg-[#dcdcdc]">
  <nav class="flex h-[26px] items-center border-b border-[#b4b4b4] bg-linear-to-b from-white from-20% via-[#d6ddf0] via-45% to-[#dfe5f5] text-sm text-[#9a9ba2] *:px-2">
    <a href="#">Projekt</a><a href="#">Bearbeiten</a><a href="#">Ansicht</a><a href="#">Layer</a><a href="#">Einstellungen</a><a href="#">Erweiterungen</a><a href="#">Vektor</a><a href="#">Raster</a><a href="#">Datenbank</a><a href="#">Web</a><a href="#">Masche</a><a href="#">Verarbeitung</a><a href="#">Hilfe</a>
  </nav>
  <div class="flex h-[33px] border-b border-[#b4b4b4] [&>div]:flex [&>div]:items-center [&>div]:border-[#b4b4b4] [&_i]:mx-[5px] [&_i]:h-[26px] [&_i]:border-l-2 [&_i]:border-dotted [&_i]:border-[#b0b0b0]">
    <div class="border-r"><i></i>
      <button aria-label="Neu"><svg><use href="#new"/></svg></button><button aria-label="Öffnen"><svg><use href="#open"/></svg></button><button aria-label="Speichern"><svg><use href="#save"/></svg></button><button aria-label="Neues Layout"><svg><use href="#layout"/></svg></button><button aria-label="Layoutverwaltung"><svg><use href="#wrench"/></svg></button><button aria-label="Stilverwaltung"><svg><use href="#style"/></svg></button></div>
    <div class="border-r pr-px"><i></i>
      <button class="on" aria-label="Karte verschieben"><svg><use href="#hand"/></svg></button><button aria-label="Zur Auswahl"><svg><use href="#pan"/></svg></button><button aria-label="Vergrößern"><svg><use href="#zin"/></svg></button><button aria-label="Verkleinern"><svg><use href="#zout"/></svg></button><button aria-label="Native Auflösung"><svg><use href="#z11"/></svg></button><button aria-label="Volle Ausdehnung"><svg><use href="#zfull"/></svg></button><button aria-label="Auf Auswahl zoomen"><svg><use href="#zsel"/></svg></button><button aria-label="Auf Layer zoomen"><svg><use href="#zlay"/></svg></button><button aria-label="Zoom zurück"><svg><use href="#zlast"/></svg></button><button aria-label="Zoom vor"><svg><use href="#znext"/></svg></button><button aria-label="Neue Ansicht"><svg><use href="#mapnew"/></svg></button><button aria-label="Neues Lesezeichen"><svg><use href="#bmnew"/></svg></button><button aria-label="Lesezeichen"><svg><use href="#bm"/></svg></button><button aria-label="Aktualisieren"><svg><use href="#refresh"/></svg></button></div>
    <div><i></i>
      <button aria-label="Objekte abfragen"><svg><use href="#ident"/></svg></button><button aria-label="Aktion"><svg><use href="#action"/></svg></button><button class="arrow text-[#888]" aria-label="Mehr"><svg><use href="#down"/></svg></button><button aria-label="Objekte wählen"><svg><use href="#select"/></svg></button><button class="arrow text-black" aria-label="Mehr"><svg><use href="#down"/></svg></button><button aria-label="Nach Wert wählen"><svg><use href="#selform"/></svg></button><button class="arrow text-black" aria-label="Mehr"><svg><use href="#down"/></svg></button><button aria-label="Auswahl aufheben"><svg><use href="#desel"/></svg></button><button aria-label="Attributtabelle"><svg><use href="#table"/></svg></button><button aria-label="Feldrechner"><svg><use href="#abacus"/></svg></button><button aria-label="Werkzeugkiste"><svg><use href="#gear"/></svg></button><button aria-label="Statistik"><svg><use href="#sigma"/></svg></button><button aria-label="Messen"><svg><use href="#measure"/></svg></button><button class="arrow text-black" aria-label="Mehr"><svg><use href="#down"/></svg></button><button class="on" aria-label="Kartenhinweise"><svg><use href="#tip"/></svg></button><button aria-label="Textanmerkung"><svg><use href="#textann"/></svg></button><button class="arrow text-black" aria-label="Mehr"><svg><use href="#down"/></svg></button></div>
  </div>
  <div class="flex h-[34px] border-b border-[#b4b4b4] [&>div]:flex [&>div]:items-center [&>div]:border-[#b4b4b4] [&_i]:mx-[5px] [&_i]:h-[26px] [&_i]:border-l-2 [&_i]:border-dotted [&_i]:border-[#b0b0b0]">
    <div class="border-r"><i></i>
      <button aria-label="Datenquellen"><svg><use href="#dsm"/></svg></button><button aria-label="GeoPackage"><svg><use href="#gpkg"/></svg></button><button aria-label="Shapedatei"><svg><use href="#vecnew"/></svg></button><button aria-label="SpatiaLite"><svg><use href="#feanew"/></svg></button><button aria-label="Temporärlayer"><svg><use href="#chip"/></svg></button><span class="mx-[3px] h-7 border-l border-[#b8c4d4]"></span><button aria-label="Virtueller Layer"><svg><use href="#vlaynew"/></svg></button></div>
    <div class="border-r pr-px"><i></i>
      <button aria-label="Bearbeitungen"><svg><use href="#gedits"/></svg></button><button aria-label="Bearbeiten"><svg><use href="#pencil"/></svg></button><button aria-label="Änderungen speichern"><svg><use href="#gsave"/></svg></button><button aria-label="Punkt hinzufügen"><svg><use href="#gpts"/></svg></button><button aria-label="Stützpunkte"><svg><use href="#gvert"/></svg></button><button class="arrow text-[#777]" aria-label="Mehr"><svg><use href="#down"/></svg></button><button aria-label="Attribute ändern"><svg><use href="#gattr"/></svg></button><button aria-label="Löschen"><svg><use href="#trash"/></svg></button><button aria-label="Ausschneiden"><svg><use href="#cut"/></svg></button><button aria-label="Kopieren"><svg><use href="#copy"/></svg></button><button aria-label="Einfügen"><svg><use href="#paste"/></svg></button><button aria-label="Rückgängig"><svg><use href="#undo"/></svg></button><button aria-label="Wiederholen"><svg><use href="#redo"/></svg></button></div>
    <div class="border-r pr-px"><i></i>
      <button aria-label="Beschriftung"><svg><use href="#abc"/></svg></button><button aria-label="Diagramm"><svg><use href="#diag"/></svg></button><button aria-label="Fixierte hervorheben"><svg><use href="#abpin"/></svg></button><button aria-label="Fixieren"><svg><use href="#glab1"/></svg></button><button aria-label="Anzeigen"><svg><use href="#glab2"/></svg></button><button aria-label="Verschieben"><svg><use href="#glab3"/></svg></button><button aria-label="Drehen"><svg><use href="#glab4"/></svg></button><button aria-label="Ändern"><svg><use href="#glab5"/></svg></button></div>
    <div class="border-r pr-px"><i></i>
      <button aria-label="Verbinden"><svg><use href="#plug"/></svg></button><button aria-label="ID"><svg><use href="#idarrow"/></svg></button><button aria-label="Foto"><svg><use href="#photo"/></svg></button><button aria-label="Datenbank"><svg><use href="#db"/></svg></button></div>
    <div class="border-r pr-px"><i></i>
      <button aria-label="Dienst hinzufügen"><svg><use href="#globe1"/></svg></button><button aria-label="Dienst suchen"><svg><use href="#globe2"/></svg></button><button aria-label="Katalog"><svg><use href="#bino"/></svg></button></div>
    <div class="border-r"><i></i>
      <button aria-label="Python"><svg><use href="#python"/></svg></button><button aria-label="KML-Export"><svg><use href="#kml"/></svg></button><button aria-label="HTML-Export"><svg><use href="#html"/></svg></button><button aria-label="Raster"><svg><use href="#rasplus"/></svg></button><button aria-label="Mosaik"><svg><use href="#mosaic"/></svg></button><button aria-label="Gitter"><svg><use href="#grid"/></svg></button></div>
    <div class="border-r pr-px"><i></i><button aria-label="Hilfe"><svg><use href="#helpb"/></svg></button></div>
    <div><i></i><button class="on" aria-label="Koordinatenaufnahme"><svg><use href="#cross"/></svg></button></div>
  </div>
  <div class="flex h-[34px] items-center border-b border-[#b4b4b4] [&_i]:mx-[5px] [&_i]:h-[26px] [&_i]:border-l-2 [&_i]:border-dotted [&_i]:border-[#b0b0b0]"><i></i>
    <button aria-label="Erweiterte Digitalisierung"><svg><use href="#tri"/></svg></button><button aria-label="Objekt verschieben"><svg><use href="#gpts"/></svg></button><button class="arrow text-[#777]" aria-label="Mehr"><svg><use href="#down"/></svg></button><button aria-label="Objekt drehen"><svg><use href="#b1"/></svg></button><button aria-label="Vereinfachen"><svg><use href="#b2"/></svg></button><button aria-label="Ring hinzufügen"><svg><use href="#b3"/></svg></button><button aria-label="Teil hinzufügen"><svg><use href="#b4"/></svg></button><button aria-label="Ring füllen"><svg><use href="#b3"/></svg></button><button aria-label="Ring löschen"><svg><use href="#b3"/></svg></button><button aria-label="Teil löschen"><svg><use href="#b4"/></svg></button><button aria-label="Umformen"><svg><use href="#b5"/></svg></button><button aria-label="Versetzen"><svg><use href="#b6"/></svg></button><button aria-label="Linie umkehren"><svg><use href="#b7"/></svg></button><button aria-label="Stutzen"><svg><use href="#b8"/></svg></button><button aria-label="Objekte trennen"><svg><use href="#b9"/></svg></button><button aria-label="Teile trennen"><svg><use href="#b9"/></svg></button><button aria-label="Verschmelzen"><svg><use href="#b10"/></svg></button><button aria-label="Attribute verschmelzen"><svg><use href="#b11"/></svg></button><button aria-label="Symbole drehen"><svg><use href="#b12"/></svg></button><button class="arrow text-[#777]" aria-label="Mehr"><svg><use href="#down"/></svg></button>
  </div>
  <div class="flex h-[34px] [&>div]:flex [&>div]:items-center [&>div]:border-[#b4b4b4] [&_i]:mx-[5px] [&_i]:h-[26px] [&_i]:border-l-2 [&_i]:border-dotted [&_i]:border-[#b0b0b0]">
    <div class="border-r"><i></i><button aria-label="OSM-Karte"><svg><use href="#osm1"/></svg></button><button aria-label="Kartenstil"><svg><use href="#osm2"/></svg></button></div>
    <div><i></i><button aria-label="Foto importieren"><svg><use href="#cam"/></svg></button><button aria-label="Bildschirmausschnitt"><svg><use href="#shot"/></svg></button></div>
  </div>
</header>

<main class="flex min-h-0 flex-1">
  <!-- layer sources -->
  <div class="flex w-[50px] shrink-0 flex-col border-r border-[#b4b4b4] [&>div]:flex [&>div]:h-[30px] [&>div]:items-center [&>div]:pl-[5px] [&_svg]:size-6 [&_button.arrow]:ml-[7px] [&_button.arrow_svg]:size-[9px]">
    <span class="mx-1 mb-1.5 mt-1 border-t-2 border-dotted border-[#b0b0b0]"></span>
    <div><button aria-label="Vektorlayer"><svg><use href="#vecplus"/></svg></button></div>
    <div><button aria-label="Rasterlayer"><svg><use href="#rasadd"/></svg></button></div>
    <div><button aria-label="Textdatei"><svg><use href="#comma"/></svg></button></div>
    <div><button aria-label="SpatiaLite"><svg><use href="#feaplus"/></svg></button></div>
    <div><button aria-label="Virtueller Layer"><svg><use href="#vlayplus"/></svg></button></div>
    <div><button aria-label="PostGIS"><svg><use href="#eleph"/></svg></button><button class="arrow" aria-label="Mehr"><svg><use href="#down"/></svg></button></div>
    <div><button aria-label="WMS"><svg><use href="#earthp"/></svg></button><button class="arrow" aria-label="Mehr"><svg><use href="#down"/></svg></button></div>
    <div><button aria-label="WCS"><svg><use href="#globp"/></svg></button></div>
    <div><button aria-label="WFS"><svg><use href="#globv"/></svg></button><button class="arrow" aria-label="Mehr"><svg><use href="#down"/></svg></button></div>
    <div><button aria-label="Neuer Layer"><svg><use href="#vecnew"/></svg></button><button class="arrow" aria-label="Mehr"><svg><use href="#down"/></svg></button></div>
    <div class="justify-center pl-0!"><button aria-label="Tabelle"><svg><use href="#tabadd"/></svg></button></div>
  </div>

  <!-- docks -->
  <div class="flex w-[310px] shrink-0 flex-col">
    <section class="flex h-[233px] flex-col">
      <div class="mt-px flex h-[30px] items-center border border-[#c4c4c4] bg-[#dadada] pl-[5px] pr-1"><h2>Layer</h2>
        <button class="ml-auto" aria-label="Abdocken"><svg class="size-[18px]" viewBox="0 0 18 18"><path d="M6 1.500h10.500V11H6zM6 3h10M1.500 8h10v8.500h-10zM2 9.500h9" fill="#dadada" stroke="#222" stroke-width="2"/></svg></button>
        <button class="ml-2" aria-label="Schließen"><svg class="size-[18px]" viewBox="0 0 18 18"><path d="M2 2l14 14M16 2L2 16" stroke="#222" stroke-width="3.500"/></svg></button></div>
      <div class="flex h-[29px] items-center gap-[7px] pl-[5px] [&_svg]:size-4">
        <button aria-label="Gestaltung"><svg><use href="#sweep"/></svg></button><button aria-label="Gruppe"><svg><use href="#groupadd"/></svg></button><button aria-label="Sichtbarkeit"><svg><use href="#eye"/></svg></button><button aria-label="Filter"><svg><use href="#funnel"/></svg></button><button aria-label="Ausdruck"><svg><use href="#eps"/></svg></button><button class="[&_svg]:size-[9px]" aria-label="Mehr"><svg><use href="#down"/></svg></button><button aria-label="Ausklappen"><svg><use href="#expd"/></svg></button><button aria-label="Einklappen"><svg><use href="#coll"/></svg></button><button aria-label="Entfernen"><svg><use href="#remv"/></svg></button></div>
      <div class="flex min-h-0 flex-1 flex-col overflow-hidden border border-[#868686] bg-white text-[#222] [&_input]:size-4 [&_input]:appearance-none [&_input]:border [&_input]:border-[#8e8f8f] [&_input]:bg-[#eceff2] [&>label]:flex [&>label]:h-6 [&>label]:shrink-0 [&>label]:items-center [&>label>span]:relative [&>label>span]:flex [&>label>span>svg]:absolute [&>label>span>svg]:inset-0.5 [&>label>span>svg]:size-3">
        <label class="ml-6 bg-[#eeeeee] pl-1"><span><input type="checkbox" checked><svg viewBox="0 0 12 12"><path d="M2 5l3 5 5-9" fill="none" stroke="#33508f" stroke-width="2"/></svg></span><svg class="ml-1.5 h-[18px] w-4"><use href="#tree"/></svg><b class="ml-1.5 text-black underline">baeume</b></label>
        <label class="pl-2.5"><svg class="mr-2.5 size-2"><use href="#opened"/></svg><span><input type="checkbox" checked><svg viewBox="0 0 12 12"><path d="M2 5l3 5 5-9" fill="none" stroke="#33508f" stroke-width="2"/></svg></span><svg class="ml-1.5 size-[18px]"><use href="#group"/></svg><span class="ml-2">Hintergrundkarten</span></label>
        <label class="pl-9"><svg class="mr-2.5 h-3 w-2"><use href="#closed"/></svg><span><input type="checkbox" checked><svg viewBox="0 0 12 12"><path d="M2 5l3 5 5-9" fill="none" stroke="#33508f" stroke-width="2"/></svg></span><svg class="ml-[7px] size-[17px]"><use href="#raster"/></svg><b class="ml-[7px] text-black">OSM Standard</b></label>
        <label class="pl-9"><svg class="mr-2.5 h-3 w-2"><use href="#closed"/></svg><span><input type="checkbox"></span><svg class="ml-[7px] size-[17px]"><use href="#raster"/></svg><b class="ml-[7px] italic text-[#777]">OpenTopoMap</b></label>
        <label class="pl-9"><svg class="mr-2.5 h-3 w-2"><use href="#closed"/></svg><span><input type="checkbox"></span><svg class="ml-[7px] size-[17px]"><use href="#raster"/></svg><b class="ml-[7px] italic text-[#777]">Maps4BW</b></label>
        <label class="pl-9"><svg class="mr-2.5 size-2"><use href="#opened"/></svg><span><input type="checkbox"></span><svg class="ml-[7px] size-[17px]"><use href="#raster"/></svg><b class="ml-[7px] italic text-[#777]">Google Satellite</b></label>
        <label class="pl-9"><svg class="mr-2.5 h-3 w-2"><use href="#closed"/></svg><span><input type="checkbox"></span><svg class="ml-[7px] size-[17px]"><use href="#raster"/></svg><b class="ml-[7px] italic text-[#777]">WebAtlasDE.light</b></label>
      </div>
    </section>
    <section class="mt-1.5 flex h-[364px] flex-col">
      <h2 class="flex h-[31px] shrink-0 items-center border border-[#c4c4c4] bg-[#dadada] pl-[5px]">Browser</h2>
      <div class="flex h-[29px] shrink-0 items-center gap-[7px] pl-[5px] [&_svg]:size-4">
        <button aria-label="Layer hinzufügen"><svg><use href="#addl"/></svg></button><button aria-label="Aktualisieren"><svg><use href="#refresh"/></svg></button><button aria-label="Filter"><svg><use href="#funnel"/></svg></button><button aria-label="Einklappen"><svg><use href="#coll"/></svg></button><button aria-label="Information"><svg><use href="#info"/></svg></button></div>
      <ul class="min-h-0 flex-1 overflow-hidden border border-b-0 border-[#868686] bg-white text-[#222] [&>li]:flex [&>li]:h-6 [&>li]:items-center [&>li]:pl-[85px]">
        <li class="pl-[59px]!"><svg class="size-2"><use href="#opened"/></svg><svg class="ml-3 h-[18px] w-5"><use href="#folderopen"/></svg><span class="ml-1.5">_QGIS für Pilzfreunde</span></li>
        <li><svg class="h-3 w-2"><use href="#closed"/></svg><svg class="ml-2.5 h-[17px] w-5"><use href="#folder"/></svg><span class="ml-1.5">Beide Biotope</span></li>
        <li><svg class="h-3 w-2"><use href="#closed"/></svg><svg class="ml-2.5 h-[17px] w-5"><use href="#folder"/></svg><span class="ml-1.5">csv-Importe</span></li>
        <li><svg class="h-3 w-2"><use href="#closed"/></svg><svg class="ml-2.5 h-[17px] w-5"><use href="#folder"/></svg><span class="ml-1.5">Forst - WMS</span></li>
        <li><svg class="h-3 w-2"><use href="#closed"/></svg><svg class="ml-2.5 h-[17px] w-5"><use href="#folder"/></svg><span class="ml-1.5">Forums-Beiträge</span></li>
        <li><svg class="h-3 w-2"><use href="#closed"/></svg><svg class="ml-2.5 h-[17px] w-5"><use href="#folder"/></svg><span class="ml-1.5">Fotos</span></li>
        <li><svg class="h-3 w-2"><use href="#closed"/></svg><svg class="ml-2.5 h-[17px] w-5"><use href="#folder"/></svg><span class="ml-1.5">geopackage</span></li>
        <li><svg class="h-3 w-2"><use href="#closed"/></svg><svg class="ml-2.5 h-[17px] w-5"><use href="#folder"/></svg><span class="ml-1.5">geotiff_export</span></li>
        <li><svg class="h-3 w-2"><use href="#closed"/></svg><svg class="ml-2.5 h-[17px] w-5"><use href="#folder"/></svg><span class="ml-1.5">gpx-Exporte</span></li>
        <li><svg class="h-3 w-2"><use href="#closed"/></svg><svg class="ml-2.5 h-[17px] w-5"><use href="#folder"/></svg><span class="ml-1.5">gpx-Importe</span></li>
        <li><svg class="h-3 w-2"><use href="#closed"/></svg><svg class="ml-2.5 h-[17px] w-5"><use href="#folder"/></svg><span class="ml-1.5">JPG-Importe</span></li>
        <li><svg class="h-3 w-2"><use href="#closed"/></svg><svg class="ml-2.5 h-[17px] w-5"><use href="#folder"/></svg><span class="ml-1.5">kml-Exporte</span></li>
      </ul>
      <div class="flex h-[21px] shrink-0 items-center border border-t-0 border-[#868686] bg-[#f2f2f2]">
        <svg class="mx-[7px] size-[9px] rotate-90"><use href="#down"/></svg>
        <div class="flex h-[18px] w-[149px] items-center justify-center border border-[#9a9a9a] bg-linear-to-b from-[#f3f3f3] to-[#d2d2d4]"><svg class="h-2 w-3"><path d="M1.500 0v8M5.500 0v8M9.500 0v8" stroke="#555"/></svg></div>
      </div>
    </section>
    <section class="mt-1.5 font-['DejaVu_Sans_Condensed','DejaVu_Sans',sans-serif] text-xs">
      <h2 class="flex h-[31px] items-center border border-[#c4c4c4] bg-[#dadada] pl-[5px] font-['Open_Sans',sans-serif] text-sm">Koordinatenaufnahme</h2>
      <div class="mt-3.5 flex h-6 items-center pl-3"><button class="flex size-[25px] items-center justify-center rounded-xs border border-[#707070] bg-[#e4e4e4]" aria-label="KBS wählen"><svg class="size-[21px]"><use href="#compass"/></svg></button><input class="ml-[18px] h-[22px] w-[243px] border border-[#e0e0e0] border-t-[#ababab] bg-white" aria-label="Koordinate im KBS"></div>
      <div class="mt-[7px] flex h-6 items-center pl-[11px]"><svg class="size-[22px]"><use href="#bgrid"/></svg><input class="ml-[22px] h-[22px] w-[243px] border border-[#e0e0e0] border-t-[#ababab] bg-white" aria-label="Koordinate im Kartengitter"></div>
      <div class="mt-[7px] flex items-center pl-3"><button class="flex size-[25px] items-center justify-center rounded-xs border border-[#707070] bg-[#e4e4e4]" aria-label="Maus verfolgen"><svg class="size-[21px]"><use href="#mouse"/></svg></button><button class="ml-[18px] h-[26px] w-[243px] rounded-[3px] border border-[#707070] bg-linear-to-b from-[#f7f7f7] from-45% to-[#d6d6d6]">In Zwischenablage kopieren</button></div>
      <button class="ml-[55px] mt-[9px] flex h-[27px] w-[243px] items-center justify-center gap-1 rounded-[3px] border border-[#707070] bg-linear-to-b from-[#f7f7f7] from-45% to-[#d6d6d6]"><svg class="size-[19px] opacity-60"><use href="#cross"/></svg>Aufnahme starten</button>
    </section>
  </div>

  <!-- map canvas -->
  <div class="ml-[5px] min-w-0 flex-1 border border-[#868686] bg-[#c8facc]">
    <svg class="size-full" viewBox="368 196 1350 788" preserveAspectRatio="xMinYMin slice">
      <rect x="368" y="196" width="1600" height="900" fill="#c8facc"/>
      <path d="M368 205l28 4-3 24-25 6z" fill="#dcd0c4" stroke="#a58f8f" stroke-width="5"/>
      <path d="M721 195h75l-25 90h-60zM1078 195h126l-60 45-70 90h-60z" fill="#add19e"/>
      <path d="M840 195h190l-60 130H810z" fill="#c6e6bb"/><path d="M1000 195h80l-30 130h-80z" fill="#b9d9a8"/>
      <path d="M1347 195h185l7 28-34 10 9 34-11 22 6 37-73 21-100 25z" fill="#dcdce8" stroke="#a9a9b4"/>
      <path d="M1533 195h22l12 48-31 29-23-6-8-33 34-10z" fill="#c8e6a0"/><path d="M1533 195h22l12 48-31 29-23-6-8-33 34-10z" fill="url(#pDots)"/>
      <path d="M1436 347l73-21-6-30 134 49q24 14 22 60l-20 100-57 232-4 60-12 22-60 34-70 13-300 60z" fill="#cdebb0"/>
      <path d="M480 905l160 10 50 34q60 20 143 16l434-42 281-24 20 6 85 85H368v-70z" fill="#cdebb0"/>
      <path d="M1585 867l102-25 20 24 12 16v102h-22z" fill="#cdebb0"/>
      <path d="M1662 525h57v340l-32-23-102 25 18-87 49-210z" fill="#add19e"/>
      <path d="M368 905h110l30 48 40 31H368z" fill="#aad3df"/>
      <path d="M393 925l85 60" stroke="#7b9fe0" stroke-width="2" stroke-dasharray="7 9"/>
      <g fill="none" stroke="#cfc9cf" stroke-width="13" stroke-linejoin="round"><path d="M1140 262l60-39 68-14 89 15 79 24 74 28 100 20 45 42 64 7M1355 190l5 35M1575 190l34 102"/></g>
      <g fill="none" stroke="#fff" stroke-width="11" stroke-linejoin="round"><path d="M1140 262l60-39 68-14 89 15 79 24 74 28 100 20 45 42 64 7M1355 190l5 35M1575 190l34 102"/></g>
      <path d="M1200 223l68-14 89 15 79 24 74 28 100 20 45 42 64 7M1577 195l32 97" fill="none" stroke="#e2dce2" stroke-width="3" stroke-dasharray="13 13"/>
      <g fill="none" stroke="#eef5ea" stroke-width="5" opacity=".7"><path d="M1659 347l8 38-9 87-24 98-22 115-42 190-134 10M1658 472l60 3M1664 556h54M1634 586l84 42M1515 685h37v12h118l48 25M1575 843l143-11M1570 875l128 110M695 925q60 22 138 25t167-17 260-22M833 950l-7 34M1051 925l10 59M1115 920l18 64M1303 925l17 59M938 940q2 25 19 38 22-15 21-43"/></g>
      <g fill="none" stroke="#b9b3b9" stroke-width="2" stroke-dasharray="3 4"><path d="M1659 347l8 38-9 87-24 98-22 115-42 190-134 10M1658 472l60 3M1664 556h54M1570 875l128 110M695 925q60 22 138 25t167-17 260-22M833 950l-7 34M1051 925l10 59M1115 920l18 64M1303 925l17 59M938 940q2 25 19 38 22-15 21-43M400 240q60-50 90-40M560 195q30 25 80 30M835 195l-8 30"/></g>
      <g fill="none" stroke="#cfcfc8" stroke-width="3" stroke-dasharray="5 4"><path d="M1634 586l84 42M1515 685h37v12h118l48 25M1575 843l143-11"/></g>
      <path d="M1637 949l28 35" stroke="#555" stroke-width="7"/><path d="M1637 949l28 35" stroke="#eee" stroke-width="5" stroke-dasharray="3 1"/>
      <path d="M1697 195l11 19 12-6M1170 196l30 30-50 12" fill="none" stroke="#8fa08f"/><path d="M1180 195l9 11M1189 195l-9 11" stroke="#555" stroke-width="2"/>
      <path d="M1053 972v12M1053 973h4v4h-4" stroke="#555" stroke-width="1.500" fill="#555"/>
      <g><use href="#mtree" x="1656" y="289" width="20" height="20"/><use href="#mtree" x="1598" y="338" width="20" height="20"/><use href="#mtree" x="1539" y="444" width="20" height="20"/><use href="#mtree" x="1470" y="514" width="20" height="20"/><use href="#mtree" x="1592" y="519" width="20" height="20"/><use href="#mtree" x="1588" y="600" width="20" height="20"/><use href="#mtree" x="1681" y="657" width="20" height="20"/><use href="#mtree" x="1541" y="731" width="20" height="20"/><use href="#mtree" x="557" y="919" width="20" height="20"/><use href="#mtree" x="1213" y="939" width="20" height="20"/><use href="#mtree" x="1284" y="957" width="20" height="20"/><use href="#mtree" x="1362" y="918" width="20" height="20"/><use href="#mtree" x="1603" y="977" width="20" height="20"/><use href="#mtree" x="1701" y="947" width="20" height="20"/></g>
      <g><use href="#statue" x="1611" y="527" width="20" height="8"/><use href="#statue" x="1649" y="628" width="20" height="8"/><use href="#statue" x="1676" y="623" width="20" height="8"/><use href="#statue" x="1554" y="795" width="20" height="8"/></g>
      <g><use href="#ftree" x="1684" y="526" width="14" height="14"/><use href="#ftree" x="1655" y="560" width="14" height="14"/><use href="#ftree" x="1680" y="587" width="14" height="14"/><use href="#ftree" x="1641" y="643" width="14" height="14"/><use href="#ftree" x="1688" y="637" width="14" height="14"/><use href="#ftree" x="1676" y="672" width="14" height="14"/><use href="#ftree" x="1646" y="700" width="14" height="14"/><use href="#ftree" x="1623" y="726" width="14" height="14"/><use href="#ftree" x="1672" y="730" width="14" height="14"/><use href="#ftree" x="1706" y="745" width="14" height="14"/><use href="#ftree" x="1643" y="780" width="14" height="14"/><use href="#ftree" x="1681" y="782" width="14" height="14"/><use href="#ftree" x="1626" y="813" width="14" height="14"/><use href="#ftree" x="1668" y="820" width="14" height="14"/><use href="#ftree" x="1596" y="850" width="14" height="14"/><use href="#ftree" x="912" y="206" width="14" height="14"/><use href="#ftree" x="1106" y="206" width="14" height="14"/></g>
      <g font-family="Noto Sans" font-size="13" fill="#8a5536" stroke="#fff" stroke-opacity=".6" stroke-width="3" paint-order="stroke">
        <text transform="translate(1646 562) rotate(-90)">Sitzendes</text><text transform="translate(1662 562) rotate(-90)">Mädchen</text><text transform="translate(1710 675) rotate(-90)">Hirtenmädchen</text><text transform="translate(1589 830) rotate(-90)">Kauernde</text>
        <text transform="translate(1702 984) rotate(-90)" fill="#2f9a51" font-size="13" font-style="italic">Frühlingsblumenwiese</text>
        <text transform="translate(788 222) rotate(-55)" fill="#777" font-size="12">Kin</text><text transform="translate(879 230) rotate(-90)" fill="#5f8a66" font-size="12">platz</text>
      </g>
    </svg>
  </div>
</main>

<!-- status bar -->
<footer class="flex h-[33px] shrink-0 items-center pl-1 pr-[22px] font-['DejaVu_Sans_Condensed','DejaVu_Sans',sans-serif] text-xs [&_input]:h-[22px] [&_input]:border [&_input]:border-[#e0e0e0] [&_input]:border-t-[#ababab] [&_input]:bg-white [&_input]:px-1">
  <div class="relative w-[279px]"><svg class="absolute left-2 top-1 size-3.5"><use href="#lens"/></svg><input class="w-full pl-7! placeholder:text-[#777]" placeholder="Zu suchender Typ (Strg+K)" aria-label="Suche"></div>
  <label class="ml-auto" for="coord">Koordinate</label><input id="coord" class="ml-1.5 w-[131px]" value="456180.9,5427716.1">
  <svg class="ml-1 size-5"><use href="#mouse"/></svg>
  <label class="ml-3.5" for="scale">Maßstab</label>
  <div class="relative ml-1.5"><select id="scale" class="h-[22px] w-[90px] appearance-none border border-[#e0e0e0] border-t-[#ababab] bg-white pl-1"><option>1:699</option></select><svg class="pointer-events-none absolute right-1.5 top-1.5 size-[9px]"><use href="#down"/></svg></div>
  <svg class="ml-3 h-5 w-4" viewBox="0 0 16 20"><path d="M4 9V6a4 4 0 0 1 8 0v3" fill="none" stroke="#777" stroke-width="2"/><rect x="1" y="9" width="14" height="10" rx="1.500" fill="#555"/></svg>
  <label class="ml-2" for="magn">Vergrößerung</label>
  <div class="relative ml-1.5"><input id="magn" class="w-[86px]" value="100%"><span class="absolute inset-y-0.5 right-px flex w-3.5 flex-col text-[#4a5fa8] *:flex *:flex-1 *:items-center *:justify-center *:border *:border-[#b9bfd0] *:bg-[#eef1f8]"><button aria-label="Mehr"><svg class="size-[7px]"><use href="#up"/></svg></button><button aria-label="Weniger"><svg class="size-[7px]"><use href="#down"/></svg></button></span></div>
  <label class="ml-2.5" for="rot">Drehung</label>
  <div class="relative ml-3"><input id="rot" class="w-[82px]" value="-90,0 °"><svg class="absolute right-[23px] top-[6px] h-2.5 w-[13px]"><use href="#bksp"/></svg><span class="absolute inset-y-0.5 right-px flex w-3.5 flex-col text-[#4a5fa8] *:flex *:flex-1 *:items-center *:justify-center *:border *:border-[#b9bfd0] *:bg-[#eef1f8]"><button aria-label="Mehr"><svg class="size-[7px]"><use href="#up"/></svg></button><button aria-label="Weniger"><svg class="size-[7px]"><use href="#down"/></svg></button></span></div>
  <label class="ml-2 flex items-center gap-1.5"><span class="relative flex"><input type="checkbox" checked class="size-[15px]! appearance-none border-[#8e8f8f]! p-0!"><svg class="absolute inset-0.5 size-[11px]" viewBox="0 0 12 12"><path d="M2 5l3 5 5-9" fill="none" stroke="#33508f" stroke-width="2"/></svg></span>Zeichnen</label>
  <button class="ml-[18px] flex items-center gap-1"><svg class="size-5" viewBox="0 0 24 24"><circle cx="12" cy="11" r="10" fill="#777"/><path d="M12 1v20M2 11h20M4 5h16M4 17h16" stroke="#f0f0f0"/><ellipse cx="12" cy="11" rx="5" ry="10" fill="none" stroke="#f0f0f0"/></svg>EPSG:25832</button>
  <button class="ml-5" aria-label="Meldungen"><svg class="size-5" viewBox="0 0 24 24"><ellipse cx="12" cy="11" rx="11" ry="9" fill="#5b5b5b"/><path d="M12 18l6 6V16z" fill="#5b5b5b"/><path d="M6 11h3M11 11h3M16 11h3" stroke="#fff" stroke-width="3"/></svg></button>
  <button class="ml-3.5" aria-label="Erweiterungen"><svg class="h-5 w-[22px]" viewBox="0 0 26 24"><path d="M2 3h6q-1 4 2 4t2-4h3v6q5 1 7-1 1-3-2-4 5-3 5 3-1 7-10 7v8h-4q0-3-2-3t-2 3H2v-5q4 1 4-2t-4-2z" fill="#ddd" stroke="#666" stroke-width="1.500"/></svg></button>
</footer>
</div>
<div class="mr-[9px] h-2 shrink-0 border-t border-[#e8c8c0] bg-linear-to-r from-[#7a2a26] from-10% via-[#c46a3c] via-50% to-[#8a2a20]"></div>
<div class="absolute inset-y-0 right-0 mt-8 w-2 bg-linear-to-b from-[#d8c4b4] from-10% via-[#2a1010] via-14% to-[#a04038]"></div>

<!-- layer properties dialog -->
<div class="absolute left-[253px] right-[292px] top-[228px] flex h-[694px] flex-col rounded-lg border border-[#4c5a4c] bg-white/25 shadow-[0_2px_10px_2px_rgba(0,0,0,0.5)] backdrop-blur-sm" role="dialog" aria-labelledby="dlg">
  <div class="flex h-[35px] shrink-0 items-center pl-2"><svg class="size-[21px]"><use href="#qgis"/></svg><h2 id="dlg" class="ml-1">Layereigenschaften - baeume | Symbolisierung</h2>
    <button class="mb-auto ml-auto mr-[7px] flex h-6 w-[59px] items-center justify-center rounded-b border border-t-0 border-[#8b9a8b] bg-white/20" aria-label="Schließen"><svg class="size-4"><path d="M3 2l10 11M13 2L3 13" stroke="#444" stroke-width="5"/><path d="M3 2l10 11M13 2L3 13" stroke="#fff" stroke-width="3"/></svg></button></div>
  <div class="mx-[7px] flex h-[650px] border border-[#56705a] bg-[#f0f0f0]">
    <aside class="flex w-[193px] shrink-0 flex-col bg-[#5c5c5c]">
      <div class="relative h-[22px] shrink-0"><input class="size-full bg-white pl-7" aria-label="Optionen filtern"><svg class="absolute left-2 top-1 size-3.5"><use href="#lens"/></svg></div>
      <div class="mt-[7px] flex min-h-0 flex-1">
        <ul class="w-[173px] overflow-hidden text-[#f4f4f4] [&>li]:flex [&>li]:h-[38px] [&>li]:items-center [&>li]:gap-2 [&>li]:pl-[5px] [&_svg]:size-6">
          <li><svg><use href="#info"/></svg>Information</li><li><svg><use href="#tools"/></svg>Quelle</li>
          <li class="bg-[#f0f0f0] pl-2! text-black"><svg><use href="#symb"/></svg>Symbolisierung</li>
          <li><svg><use href="#abc"/></svg>Beschriftungen</li><li><svg><use href="#diag"/></svg>Diagramme</li><li><svg><use href="#cube"/></svg>3D-Ansicht</li><li><svg><use href="#fields"/></svg>Quellfelder</li><li><svg><use href="#form"/></svg>Attributformular</li><li><svg><use href="#join"/></svg>Verknüpfungen</li><li><svg><use href="#aux"/></svg>Hilfsspeicher</li><li><svg><use href="#act"/></svg>Aktionen</li><li><svg><use href="#bubble"/></svg>Anzeigen</li><li><svg><use href="#brush"/></svg>Darstellung</li><li><svg><use href="#vari"/></svg>Variablen</li><li><svg><use href="#meta"/></svg>Metadaten</li><li><svg><use href="#dep"/></svg>Abhängigkeiten</li>
          <li class="items-start! pt-1.5"><svg viewBox="0 0 24 24"><path d="M1 1h7v9H1z" fill="#e8c61e"/></svg></li>
        </ul>
        <div class="flex w-5 flex-col items-center bg-[#f3f3f3] text-[#444]"><svg class="mb-1.5 mt-1.5 size-[9px]"><use href="#up"/></svg>
          <div class="flex h-[484px] w-[18px] items-center justify-center rounded-xs border border-[#999] bg-linear-to-r from-[#f1f1f3] to-[#c6c6cc]"><svg class="h-3 w-2"><path d="M0 1.500h8M0 5.500h8M0 9.500h8" stroke="#555"/></svg></div>
          <svg class="mb-1.5 mt-auto size-[9px]"><use href="#down"/></svg></div>
      </div>
    </aside>
    <section class="flex min-w-0 flex-1 flex-col pl-1.5 pr-1 pt-[3px] font-['DejaVu_Sans_Condensed','DejaVu_Sans',sans-serif] text-xs">
      <div class="relative"><select class="h-[25px] w-full appearance-none rounded-[3px] border border-[#707070] bg-linear-to-b from-[#f7f7f7] from-45% to-[#d2d2d2] pl-[27px]" aria-label="Darstellungsart"><option>Einzelsymbol</option></select><svg class="absolute left-[7px] top-1 h-[18px] w-4" viewBox="0 0 16 18"><path d="M0 .5h13v4H0zM3 7h13v4H3zM0 13.500h13v4H0z" fill="#27a35a" stroke="#14663a"/></svg><svg class="pointer-events-none absolute right-[6px] top-2 size-[10px]"><use href="#down"/></svg></div>
      <div class="mt-[7px] flex h-[168px]">
        <div class="w-[478px] shrink-0 border border-[#868686] bg-white font-['Open_Sans',sans-serif] text-sm">
          <div class="flex h-6 items-center pl-2.5"><svg class="size-2"><use href="#opened"/></svg><div class="ml-2 flex h-full flex-1 items-center border border-[#e2e2e2] bg-linear-to-b from-[#fafafa] to-[#e6e6e6] pl-px"><span class="size-[17px] rounded-xs bg-[#14304f]"></span><b class="ml-1.5">Markierung</b></div></div>
          <div class="flex h-6 items-center pl-[53px]"><span class="size-[17px] rounded-xs bg-black"></span><span class="ml-1.5 text-[#222]">Einfache Markierung</span></div>
        </div>
        <div class="flex flex-1 items-center justify-center pl-2"><svg class="size-[101px]"><path d="M50.500 0v100M0 50.500h100" stroke="#999"/><circle cx="50.500" cy="50.500" r="11" fill="#000"/></svg></div>
      </div>
      <div class="mt-2 flex gap-2 pl-px *:flex *:h-[27px] *:w-[31px] *:items-center *:justify-center *:rounded-[3px] *:border *:border-[#b9b9b9] [&_svg]:size-[18px]">
        <button class="border-[#707070]! bg-[#e4e4e4]" aria-label="Symbollayer hinzufügen"><svg viewBox="0 0 18 18"><path d="M6.500 1h5v5.500H17v5h-5.500V17h-5v-5.500H1v-5h5.500z" fill="#fff" stroke="#3d8a4d" stroke-width="1.300"/><path d="M9 4v10M4 9h10" stroke="#6fb27a" stroke-width="2"/></svg></button>
        <button aria-label="Entfernen"><svg viewBox="0 0 18 18"><path d="M1 6.500h16v5H1zM4 9h10" fill="none" stroke="#dccaca"/></svg></button>
        <button aria-label="Sperren"><svg viewBox="0 0 18 18"><path d="M6 4q0-3 4-3 3 0 3 4v3" fill="none" stroke="#d3d3d3" stroke-width="2"/><path d="M2 8h14v9H2z" fill="#dad6c8"/></svg></button>
        <button aria-label="Duplizieren"><svg viewBox="0 0 18 18"><path d="M1 3v14h12M4 1h13v10l-3 3H4zM12 14v-4h5" fill="none" stroke="#cdcdcd" stroke-width="1.500"/></svg></button>
        <button aria-label="Nach oben"><svg viewBox="0 0 18 18"><path d="M1 15L9 3l8 12z" fill="#d2d2d2" stroke="#bbb"/></svg></button>
        <button aria-label="Nach unten"><svg viewBox="0 0 18 18"><path d="M1 3l8 12 8-12z" fill="#c9c9c9" stroke="#bbb"/></svg></button>
      </div>
      <hr class="mt-2 border-[#a0a0a0]">
      <div class="flex flex-1 flex-col pr-[11px]">
        <div class="mt-2.5 flex items-center"><label class="w-[53px] shrink-0" for="unit">Einheit</label><div class="relative flex-1"><select id="unit" class="block h-[22px] w-full appearance-none rounded-[3px] border border-[#707070] bg-linear-to-b from-[#f7f7f7] from-45% to-[#d2d2d2] pl-[3px]"><option>Millimeter</option></select><svg class="pointer-events-none absolute right-[6px] top-1.5 size-[10px]"><use href="#down"/></svg></div></div>
        <div class="flex h-5 items-center"><label class="w-[53px] shrink-0" for="opac">Deckkraft</label>
          <input id="opac" type="range" value="100" class="h-[18px] min-w-0 flex-1 appearance-none bg-linear-to-b from-transparent from-40% via-[#a8a8a8] via-45% to-transparent to-55% [&::-webkit-slider-thumb]:h-[18px] [&::-webkit-slider-thumb]:w-3 [&::-webkit-slider-thumb]:appearance-none [&::-webkit-slider-thumb]:rounded-xs [&::-webkit-slider-thumb]:border [&::-webkit-slider-thumb]:border-[#707070] [&::-webkit-slider-thumb]:bg-[#ebebeb]">
          <div class="relative ml-1"><input class="h-[18px] w-[99px] bg-white pl-[3px]" value="100,0 %" aria-label="Deckkraft in Prozent"><span class="absolute inset-y-px right-px flex w-3.5 flex-col text-[#4a5fa8] *:flex *:flex-1 *:items-center *:justify-center *:border *:border-[#b9bfd0] *:bg-[#eef1f8]"><button aria-label="Mehr"><svg class="size-[7px]"><use href="#up"/></svg></button><button aria-label="Weniger"><svg class="size-[7px]"><use href="#down"/></svg></button></span></div></div>
        <div class="flex items-center"><span class="w-[54px] shrink-0">Farbe</span><div class="flex h-6 flex-1 rounded-[3px] border border-[#707070] bg-[#f4f4f4]"><button class="my-px ml-[3px] mr-[3px] flex-1 rounded-xs bg-black" aria-label="Farbe wählen"></button><button class="flex w-4 items-center justify-center border-l border-[#999]" aria-label="Farboptionen"><svg class="size-[10px]"><use href="#down"/></svg></button></div></div>
        <div class="mt-[9px] flex items-center"><label class="w-[55px] shrink-0" for="size">Größe</label><div class="relative flex-1"><input id="size" class="block h-[22px] w-full border border-[#e0e0e0] border-t-[#ababab] bg-white pl-0.5" value="5,00000"><span class="absolute inset-y-0.5 right-0.5 flex w-3.5 flex-col text-[#4a5fa8] *:flex *:flex-1 *:items-center *:justify-center *:border *:border-[#b9bfd0] *:bg-[#eef1f8]"><button aria-label="Mehr"><svg class="size-[7px]"><use href="#up"/></svg></button><button aria-label="Weniger"><svg class="size-[7px]"><use href="#down"/></svg></button></span></div><button class="ml-2.5 mr-1" aria-label="Datendefiniert"><svg class="h-5 w-6"><use href="#dd"/></svg></button></div>
        <div class="mt-[13px] flex items-center"><label class="w-[55px] shrink-0" for="drot">Drehung</label><div class="relative flex-1"><input id="drot" class="block h-[22px] w-full border border-[#e0e0e0] border-t-[#ababab] bg-white pl-0.5" value="0,00 °"><span class="absolute inset-y-0.5 right-0.5 flex w-3.5 flex-col text-[#4a5fa8] *:flex *:flex-1 *:items-center *:justify-center *:border *:border-[#b9bfd0] *:bg-[#eef1f8]"><button aria-label="Mehr"><svg class="size-[7px]"><use href="#up"/></svg></button><button aria-label="Weniger"><svg class="size-[7px]"><use href="#down"/></svg></button></span></div><button class="ml-2.5 mr-1" aria-label="Datendefiniert"><svg class="h-5 w-6"><use href="#dd"/></svg></button></div>
        <hr class="mt-[7px] border-[#a0a0a0]">
        <div class="mt-2 flex items-center"><div class="relative flex-1"><svg class="absolute left-[11px] top-1 size-3.5"><use href="#lens"/></svg><input class="block h-[22px] w-full border border-[#e0e0e0] border-t-[#ababab] bg-white pl-[30px]" value="Favoriten" aria-label="Symbolgruppe"><svg class="absolute right-[31px] top-[6px] h-2.5 w-[13px]"><use href="#bksp"/></svg><svg class="absolute right-1.5 top-1.5 size-[10px]"><use href="#down"/></svg></div><button class="ml-2.5 mr-1" aria-label="Stilverwaltung"><svg class="size-[18px]"><use href="#style"/></svg></button></div>
        <div class="mt-1.5 flex h-[97px] border border-[#868686] bg-white">
          <div class="grid flex-1 grid-cols-7 items-center pl-1 pr-[5px] pt-[27px] *:flex *:justify-center">
            <button aria-label="Punkt schwarz"><svg class="size-6"><circle cx="12" cy="12" r="8.500"/></svg></button>
            <button aria-label="Punkt weiß"><svg class="size-6"><circle cx="12" cy="12" r="9.500" fill="#fff" stroke="#000" stroke-width="1.500"/></svg></button>
            <button aria-label="Punkt blau"><svg class="size-6"><circle cx="12" cy="12" r="9.500" fill="#487bb6" stroke="#2f5580" stroke-width="1.500"/></svg></button>
            <button aria-label="Punkt grün"><svg class="size-6"><circle cx="12" cy="12" r="9.500" fill="#54b04a" stroke="#3a7a36" stroke-width="1.500"/></svg></button>
            <button aria-label="Punkt rot"><svg class="size-6"><circle cx="12" cy="12" r="9.500" fill="#db1e2a" stroke="#801119" stroke-width="1.500"/></svg></button>
            <button aria-label="Stern"><svg class="size-[34px] drop-shadow-[4px_5px_3px_rgba(0,0,0,0.7)]" viewBox="0 0 34 34"><path d="M17 1l2 9 6-7-2 9 8-3-6 7 8 2-8 3 5 6-8-2 2 7-6-5-1 7-3-7-5 5 1-7-8 2 6-6-8-3 8-2-6-7 8 3-2-9 6 7z" fill="#f00"/></svg></button>
            <button aria-label="Barrierefrei"><svg class="size-[26px]" viewBox="0 0 26 26"><rect width="26" height="26" rx="2" fill="#447bab"/><circle cx="17" cy="5" r="2.300" fill="#fff"/><path d="M8 7l5-1 3 2-3 5h6l-1 7M11 12a5 5 0 1 0 4 7" fill="none" stroke="#fff" stroke-width="2.300"/></svg></button>
          </div>
          <div class="flex w-[22px] flex-col items-center bg-[#f3f3f3] text-[#444]"><svg class="my-1.5 size-[9px]"><use href="#up"/></svg><div class="mt-0.5 h-5 w-[18px] border border-[#999] bg-linear-to-r from-[#f1f1f3] to-[#ccc]"></div><svg class="mb-1.5 mt-auto size-[9px]"><use href="#down"/></svg></div>
        </div>
        <div class="mt-1.5 flex h-[26px] items-center">
          <button class="flex size-[26px] items-center justify-center rounded-[3px] border border-[#555] bg-[#dedede]" aria-label="Symbolansicht"><svg class="size-[18px]" viewBox="0 0 18 18"><path d="M1 1h16v16H1z" fill="#9dbfe6"/><path d="M2 4h14M2 9h14M2 14h14" stroke="#f2f6fb" stroke-width="4" stroke-dasharray="4 1"/><path d="M3 4h14M3 9h14M3 14h14" stroke="#6b93c4" stroke-width="2" stroke-dasharray="2 3"/></svg></button>
          <button class="ml-[5px]" aria-label="Listenansicht"><svg class="size-[18px]"><use href="#table"/></svg></button>
          <button class="ml-auto h-[26px] w-[109px] rounded-[3px] border border-[#707070] bg-linear-to-b from-[#f7f7f7] from-45% to-[#d6d6d6]">Symbol speichern</button>
          <button class="ml-2 flex h-[26px] w-[91px] items-center justify-center gap-3 rounded-[3px] border border-[#707070] bg-linear-to-b from-[#f7f7f7] from-45% to-[#d6d6d6]">Erweitert<svg class="size-2"><use href="#down"/></svg></button>
        </div>
        <button class="mt-[22px] flex h-[26px] items-center gap-2 pl-0.5 text-left font-bold"><svg class="size-3 -rotate-90 text-[#333]"><use href="#down"/></svg>Layerdarstellung</button>
      </div>
      <div class="mb-[3px] flex gap-[9px] *:h-[26px] *:w-[91px] *:rounded-[3px] *:border *:border-[#707070] *:bg-linear-to-b *:from-[#f7f7f7] *:from-45% *:to-[#d6d6d6]">
        <button class="mr-auto flex items-center justify-end gap-7 pr-[5px]">Stil<svg class="size-2"><use href="#down"/></svg></button>
        <button>OK</button><button>Abbrechen</button>
        <button class="relative">Anwenden<svg class="absolute -top-12 left-[38px] h-12 w-3 overflow-visible" viewBox="0 0 12 48"><path d="M6 2v30" stroke="#e11" stroke-width="2.500"/><path d="M6 45L0 20l6 4 6-4z" fill="#e00"/></svg></button>
        <button>Hilfe</button>
      </div>
    </section>
  </div>
  <!-- red tutorial marks -->
  <svg class="pointer-events-none absolute inset-0 size-full overflow-visible"><g transform="translate(-255 -230)" fill="none" stroke="#d01a10" stroke-width="2.500">
    <path d="M288 261h307"/><ellipse cx="347" cy="389" rx="96" ry="28"/><path d="M470 292h150v35H470z" stroke-width="3"/><path d="M449 566h55v21h-55zM451 596h55v21h-55z" stroke-width="2"/>
    <path d="M632 537l-60 49M991 510l-60 49" stroke="#e01010"/><path d="M555 600l15-21 2 7 7 3zM914 573l15-21 2 7 7 3z" fill="#f00" stroke="#f00" stroke-width="1.500"/></g></svg>
</div>
<div class="absolute left-[750px] top-[903px] flex h-[43px] w-[107px] items-center justify-center border-2 border-black bg-[#ff0] pr-1 font-['Liberation_Sans',sans-serif] text-xl">Bild 19</div>
</body>
</html>
